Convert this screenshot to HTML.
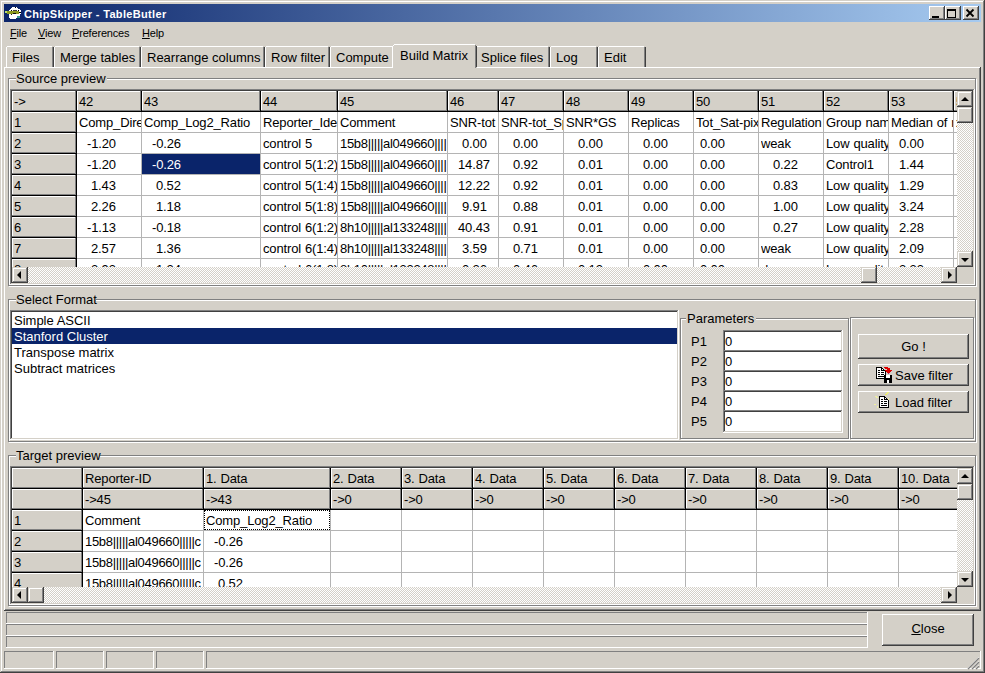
<!DOCTYPE html><html><head><meta charset="utf-8"><style>
html,body{margin:0;padding:0;width:985px;height:673px;overflow:hidden;background:#D4D0C8}
div,svg{position:absolute;box-sizing:border-box}
.t{font-family:"Liberation Sans",sans-serif;white-space:pre;}
.c{font-size:13px;line-height:15px;overflow:hidden;letter-spacing:-0.15px;word-spacing:0.55px}
u{text-decoration:underline;text-underline-offset:1px}
</style></head><body>
<div style="left:0px;top:0px;width:985px;height:673px;background:#D4D0C8;"></div>
<div style="left:0px;top:0px;width:985px;height:1px;background:#D4D0C8;"></div>
<div style="left:0px;top:0px;width:1px;height:673px;background:#D4D0C8;"></div>
<div style="left:1px;top:1px;width:983px;height:1px;background:#FFFFFF;"></div>
<div style="left:1px;top:1px;width:1px;height:671px;background:#FFFFFF;"></div>
<div style="left:984px;top:0px;width:1px;height:673px;background:#404040;"></div>
<div style="left:0px;top:672px;width:985px;height:1px;background:#404040;"></div>
<div style="left:983px;top:1px;width:1px;height:671px;background:#808080;"></div>
<div style="left:1px;top:671px;width:983px;height:1px;background:#808080;"></div>
<div style="left:4px;top:4px;width:977px;height:18px;background:linear-gradient(to right,#0A246A,#A6CAF0);"></div>
<div style="left:929px;top:6px;width:16px;height:14px;background:#D4D0C8;"></div>
<div style="left:929px;top:6px;width:16px;height:1px;background:#FFFFFF;"></div>
<div style="left:929px;top:6px;width:1px;height:14px;background:#FFFFFF;"></div>
<div style="left:929px;top:19px;width:16px;height:1px;background:#404040;"></div>
<div style="left:944px;top:6px;width:1px;height:14px;background:#404040;"></div>
<div style="left:930px;top:7px;width:14px;height:1px;background:#D4D0C8;"></div>
<div style="left:930px;top:7px;width:1px;height:12px;background:#D4D0C8;"></div>
<div style="left:930px;top:18px;width:14px;height:1px;background:#808080;"></div>
<div style="left:943px;top:7px;width:1px;height:12px;background:#808080;"></div>
<div style="left:945px;top:6px;width:16px;height:14px;background:#D4D0C8;"></div>
<div style="left:945px;top:6px;width:16px;height:1px;background:#FFFFFF;"></div>
<div style="left:945px;top:6px;width:1px;height:14px;background:#FFFFFF;"></div>
<div style="left:945px;top:19px;width:16px;height:1px;background:#404040;"></div>
<div style="left:960px;top:6px;width:1px;height:14px;background:#404040;"></div>
<div style="left:946px;top:7px;width:14px;height:1px;background:#D4D0C8;"></div>
<div style="left:946px;top:7px;width:1px;height:12px;background:#D4D0C8;"></div>
<div style="left:946px;top:18px;width:14px;height:1px;background:#808080;"></div>
<div style="left:959px;top:7px;width:1px;height:12px;background:#808080;"></div>
<div style="left:963px;top:6px;width:16px;height:14px;background:#D4D0C8;"></div>
<div style="left:963px;top:6px;width:16px;height:1px;background:#FFFFFF;"></div>
<div style="left:963px;top:6px;width:1px;height:14px;background:#FFFFFF;"></div>
<div style="left:963px;top:19px;width:16px;height:1px;background:#404040;"></div>
<div style="left:978px;top:6px;width:1px;height:14px;background:#404040;"></div>
<div style="left:964px;top:7px;width:14px;height:1px;background:#D4D0C8;"></div>
<div style="left:964px;top:7px;width:1px;height:12px;background:#D4D0C8;"></div>
<div style="left:964px;top:18px;width:14px;height:1px;background:#808080;"></div>
<div style="left:977px;top:7px;width:1px;height:12px;background:#808080;"></div>
<div style="left:932px;top:16px;width:7px;height:2px;background:#000;"></div>
<div style="left:947px;top:9px;width:9px;height:1px;background:#000;"></div>
<div style="left:947px;top:9px;width:1px;height:9px;background:#000;"></div>
<div style="left:947px;top:17px;width:9px;height:1px;background:#000;"></div>
<div style="left:955px;top:9px;width:1px;height:9px;background:#000;"></div>
<div style="left:947px;top:10px;width:9px;height:1px;background:#000;"></div>
<svg style="left:963px;top:6px;width:16px;height:14px" width="16" height="14"><path d="M3.5 3.5 L10.5 10.5 M10.5 3.5 L3.5 10.5" stroke="#000" stroke-width="1.8"/></svg>
<svg style="left:0px;top:0px;width:24px;height:24px" width="24" height="24" shape-rendering="crispEdges"><rect x="12" y="7" width="5" height="1" fill="#fff"/><rect x="11" y="8" width="7" height="1" fill="#fff"/><rect x="10" y="9" width="10" height="1" fill="#fff"/><rect x="9" y="10" width="12" height="1" fill="#fff"/><rect x="8" y="11" width="13" height="1" fill="#fff"/><rect x="8" y="12" width="13" height="1" fill="#fff"/><rect x="8" y="13" width="13" height="1" fill="#fff"/><rect x="9" y="14" width="11" height="1" fill="#fff"/><rect x="9" y="15" width="11" height="1" fill="#fff"/><rect x="9" y="16" width="8" height="1" fill="#fff"/><rect x="9" y="17" width="8" height="1" fill="#fff"/><rect x="10" y="18" width="6" height="1" fill="#fff"/><rect x="7" y="11" width="12" height="3" fill="#8c9a1e"/><rect x="5" y="11" width="2" height="2" fill="#b8e070"/><rect x="11" y="10" width="1" height="1" fill="#000"/><rect x="18" y="10" width="1" height="1" fill="#000"/><rect x="13" y="10" width="4" height="1" fill="#404040"/><rect x="13" y="13" width="3" height="1" fill="#111"/><rect x="19" y="12" width="2" height="1" fill="#000"/><rect x="11" y="14" width="1" height="1" fill="#222"/><rect x="17" y="16" width="3" height="2" fill="#3a9a9a"/><rect x="15" y="7" width="1" height="1" fill="#000"/></svg>
<div class="t" style="left:24px;top:8px;font-size:11px;line-height:13px;color:#fff;font-weight:bold;letter-spacing:0.33px;">ChipSkipper - TableButler</div>
<div class="t" style="left:10px;top:27px;font-size:11px;line-height:13px;color:#000;letter-spacing:-0.18px;"><u>F</u>ile</div>
<div class="t" style="left:38px;top:27px;font-size:11px;line-height:13px;color:#000;letter-spacing:-0.18px;"><u>V</u>iew</div>
<div class="t" style="left:72px;top:27px;font-size:11px;line-height:13px;color:#000;letter-spacing:-0.18px;"><u>P</u>references</div>
<div class="t" style="left:142px;top:27px;font-size:11px;line-height:13px;color:#000;letter-spacing:-0.18px;"><u>H</u>elp</div>
<div style="left:6px;top:46px;width:48px;height:21px;background:#D4D0C8;"></div>
<div style="left:7px;top:46px;width:45px;height:1px;background:#FFFFFF;"></div>
<div style="left:6px;top:47px;width:1px;height:20px;background:#FFFFFF;"></div>
<div style="left:52px;top:47px;width:1px;height:20px;background:#808080;"></div>
<div style="left:53px;top:47px;width:1px;height:20px;background:#404040;"></div>
<div class="t" style="left:12px;top:50px;font-size:13px;line-height:15px;color:#000;">Files</div>
<div style="left:54px;top:46px;width:87px;height:21px;background:#D4D0C8;"></div>
<div style="left:55px;top:46px;width:84px;height:1px;background:#FFFFFF;"></div>
<div style="left:54px;top:47px;width:1px;height:20px;background:#FFFFFF;"></div>
<div style="left:139px;top:47px;width:1px;height:20px;background:#808080;"></div>
<div style="left:140px;top:47px;width:1px;height:20px;background:#404040;"></div>
<div class="t" style="left:60px;top:50px;font-size:13px;line-height:15px;color:#000;">Merge tables</div>
<div style="left:141px;top:46px;width:124px;height:21px;background:#D4D0C8;"></div>
<div style="left:142px;top:46px;width:121px;height:1px;background:#FFFFFF;"></div>
<div style="left:141px;top:47px;width:1px;height:20px;background:#FFFFFF;"></div>
<div style="left:263px;top:47px;width:1px;height:20px;background:#808080;"></div>
<div style="left:264px;top:47px;width:1px;height:20px;background:#404040;"></div>
<div class="t" style="left:147px;top:50px;font-size:13px;line-height:15px;color:#000;">Rearrange columns</div>
<div style="left:265px;top:46px;width:65px;height:21px;background:#D4D0C8;"></div>
<div style="left:266px;top:46px;width:62px;height:1px;background:#FFFFFF;"></div>
<div style="left:265px;top:47px;width:1px;height:20px;background:#FFFFFF;"></div>
<div style="left:328px;top:47px;width:1px;height:20px;background:#808080;"></div>
<div style="left:329px;top:47px;width:1px;height:20px;background:#404040;"></div>
<div class="t" style="left:271px;top:50px;font-size:13px;line-height:15px;color:#000;">Row filter</div>
<div style="left:330px;top:46px;width:66px;height:21px;background:#D4D0C8;"></div>
<div style="left:331px;top:46px;width:63px;height:1px;background:#FFFFFF;"></div>
<div style="left:330px;top:47px;width:1px;height:20px;background:#FFFFFF;"></div>
<div style="left:394px;top:47px;width:1px;height:20px;background:#808080;"></div>
<div style="left:395px;top:47px;width:1px;height:20px;background:#404040;"></div>
<div class="t" style="left:336px;top:50px;font-size:13px;line-height:15px;color:#000;">Compute</div>
<div style="left:475px;top:46px;width:75px;height:21px;background:#D4D0C8;"></div>
<div style="left:476px;top:46px;width:72px;height:1px;background:#FFFFFF;"></div>
<div style="left:475px;top:47px;width:1px;height:20px;background:#FFFFFF;"></div>
<div style="left:548px;top:47px;width:1px;height:20px;background:#808080;"></div>
<div style="left:549px;top:47px;width:1px;height:20px;background:#404040;"></div>
<div class="t" style="left:481px;top:50px;font-size:13px;line-height:15px;color:#000;">Splice files</div>
<div style="left:550px;top:46px;width:48px;height:21px;background:#D4D0C8;"></div>
<div style="left:551px;top:46px;width:45px;height:1px;background:#FFFFFF;"></div>
<div style="left:550px;top:47px;width:1px;height:20px;background:#FFFFFF;"></div>
<div style="left:596px;top:47px;width:1px;height:20px;background:#808080;"></div>
<div style="left:597px;top:47px;width:1px;height:20px;background:#404040;"></div>
<div class="t" style="left:556px;top:50px;font-size:13px;line-height:15px;color:#000;">Log</div>
<div style="left:598px;top:46px;width:48px;height:21px;background:#D4D0C8;"></div>
<div style="left:599px;top:46px;width:45px;height:1px;background:#FFFFFF;"></div>
<div style="left:598px;top:47px;width:1px;height:20px;background:#FFFFFF;"></div>
<div style="left:644px;top:47px;width:1px;height:20px;background:#808080;"></div>
<div style="left:645px;top:47px;width:1px;height:20px;background:#404040;"></div>
<div class="t" style="left:604px;top:50px;font-size:13px;line-height:15px;color:#000;">Edit</div>
<div style="left:4px;top:67px;width:977px;height:1px;background:#FFFFFF;"></div>
<div style="left:4px;top:67px;width:1px;height:544px;background:#FFFFFF;"></div>
<div style="left:979px;top:68px;width:1px;height:542px;background:#808080;"></div>
<div style="left:980px;top:67px;width:1px;height:544px;background:#404040;"></div>
<div style="left:5px;top:609px;width:975px;height:1px;background:#808080;"></div>
<div style="left:4px;top:610px;width:977px;height:1px;background:#404040;"></div>
<div style="left:392px;top:44px;width:85px;height:24px;background:#D4D0C8;"></div>
<div style="left:394px;top:44px;width:81px;height:1px;background:#FFFFFF;"></div>
<div style="left:393px;top:45px;width:1px;height:1px;background:#FFFFFF;"></div>
<div style="left:392px;top:46px;width:1px;height:22px;background:#FFFFFF;"></div>
<div style="left:475px;top:45px;width:1px;height:23px;background:#808080;"></div>
<div style="left:476px;top:46px;width:1px;height:21px;background:#404040;"></div>
<div class="t" style="left:400px;top:48px;font-size:13px;line-height:15px;color:#000;">Build Matrix</div>
<div style="left:9px;top:79px;width:968px;height:1px;background:#FFFFFF;"></div>
<div style="left:9px;top:79px;width:1px;height:208px;background:#FFFFFF;"></div>
<div style="left:9px;top:286px;width:968px;height:1px;background:#FFFFFF;"></div>
<div style="left:976px;top:79px;width:1px;height:208px;background:#FFFFFF;"></div>
<div style="left:8px;top:78px;width:968px;height:1px;background:#808080;"></div>
<div style="left:8px;top:78px;width:1px;height:208px;background:#808080;"></div>
<div style="left:8px;top:285px;width:968px;height:1px;background:#808080;"></div>
<div style="left:975px;top:78px;width:1px;height:208px;background:#808080;"></div>
<div style="left:9px;top:79px;width:966px;height:1px;background:#FFFFFF;"></div>
<div style="left:9px;top:79px;width:1px;height:206px;background:#FFFFFF;"></div>
<div style="left:16px;top:72px;width:91px;height:12px;background:#D4D0C8;"></div>
<div class="t" style="left:16px;top:71px;font-size:13px;line-height:15px;color:#000;">Source preview</div>
<div style="left:9px;top:300px;width:968px;height:1px;background:#FFFFFF;"></div>
<div style="left:9px;top:300px;width:1px;height:143px;background:#FFFFFF;"></div>
<div style="left:9px;top:442px;width:968px;height:1px;background:#FFFFFF;"></div>
<div style="left:976px;top:300px;width:1px;height:143px;background:#FFFFFF;"></div>
<div style="left:8px;top:299px;width:968px;height:1px;background:#808080;"></div>
<div style="left:8px;top:299px;width:1px;height:143px;background:#808080;"></div>
<div style="left:8px;top:441px;width:968px;height:1px;background:#808080;"></div>
<div style="left:975px;top:299px;width:1px;height:143px;background:#808080;"></div>
<div style="left:9px;top:300px;width:966px;height:1px;background:#FFFFFF;"></div>
<div style="left:9px;top:300px;width:1px;height:141px;background:#FFFFFF;"></div>
<div style="left:16px;top:293px;width:80px;height:12px;background:#D4D0C8;"></div>
<div class="t" style="left:16px;top:292px;font-size:13px;line-height:15px;color:#000;">Select Format</div>
<div style="left:9px;top:456px;width:968px;height:1px;background:#FFFFFF;"></div>
<div style="left:9px;top:456px;width:1px;height:151px;background:#FFFFFF;"></div>
<div style="left:9px;top:606px;width:968px;height:1px;background:#FFFFFF;"></div>
<div style="left:976px;top:456px;width:1px;height:151px;background:#FFFFFF;"></div>
<div style="left:8px;top:455px;width:968px;height:1px;background:#808080;"></div>
<div style="left:8px;top:455px;width:1px;height:151px;background:#808080;"></div>
<div style="left:8px;top:605px;width:968px;height:1px;background:#808080;"></div>
<div style="left:975px;top:455px;width:1px;height:151px;background:#808080;"></div>
<div style="left:9px;top:456px;width:966px;height:1px;background:#FFFFFF;"></div>
<div style="left:9px;top:456px;width:1px;height:149px;background:#FFFFFF;"></div>
<div style="left:16px;top:449px;width:84px;height:12px;background:#D4D0C8;"></div>
<div class="t" style="left:16px;top:448px;font-size:13px;line-height:15px;color:#000;">Target preview</div>
<div style="left:10px;top:89px;width:965px;height:1px;background:#808080;"></div>
<div style="left:10px;top:89px;width:1px;height:196px;background:#808080;"></div>
<div style="left:10px;top:284px;width:965px;height:1px;background:#FFFFFF;"></div>
<div style="left:974px;top:89px;width:1px;height:196px;background:#FFFFFF;"></div>
<div style="left:11px;top:90px;width:963px;height:1px;background:#404040;"></div>
<div style="left:11px;top:90px;width:1px;height:194px;background:#404040;"></div>
<div style="left:11px;top:283px;width:963px;height:1px;background:#D4D0C8;"></div>
<div style="left:973px;top:90px;width:1px;height:194px;background:#D4D0C8;"></div>
<div style="left:12px;top:91px;width:945px;height:176px;overflow:hidden"><div style="left:0px;top:0px;width:945px;height:176px;background:#fff"></div><div style="left:0px;top:0px;width:64px;height:20px;background:#D4D0C8"></div><div style="left:0px;top:0px;width:64px;height:1px;background:#FFFFFF"></div><div style="left:0px;top:0px;width:1px;height:20px;background:#FFFFFF"></div><div style="left:0px;top:19px;width:64px;height:1px;background:#808080"></div><div style="left:63px;top:0px;width:1px;height:20px;background:#808080"></div><div style="left:64px;top:0px;width:1px;height:21px;background:#000"></div><div style="left:0px;top:20px;width:65px;height:1px;background:#000"></div><div class="t c" style="left:2px;top:3px;width:62px;color:#000">-&gt;</div><div style="left:65px;top:0px;width:64px;height:20px;background:#D4D0C8"></div><div style="left:65px;top:0px;width:64px;height:1px;background:#FFFFFF"></div><div style="left:65px;top:0px;width:1px;height:20px;background:#FFFFFF"></div><div style="left:65px;top:19px;width:64px;height:1px;background:#808080"></div><div style="left:128px;top:0px;width:1px;height:20px;background:#808080"></div><div style="left:129px;top:0px;width:1px;height:21px;background:#000"></div><div style="left:65px;top:20px;width:65px;height:1px;background:#000"></div><div class="t c" style="left:67px;top:3px;width:62px;color:#000">42</div><div style="left:130px;top:0px;width:118px;height:20px;background:#D4D0C8"></div><div style="left:130px;top:0px;width:118px;height:1px;background:#FFFFFF"></div><div style="left:130px;top:0px;width:1px;height:20px;background:#FFFFFF"></div><div style="left:130px;top:19px;width:118px;height:1px;background:#808080"></div><div style="left:247px;top:0px;width:1px;height:20px;background:#808080"></div><div style="left:248px;top:0px;width:1px;height:21px;background:#000"></div><div style="left:130px;top:20px;width:119px;height:1px;background:#000"></div><div class="t c" style="left:132px;top:3px;width:116px;color:#000">43</div><div style="left:249px;top:0px;width:76px;height:20px;background:#D4D0C8"></div><div style="left:249px;top:0px;width:76px;height:1px;background:#FFFFFF"></div><div style="left:249px;top:0px;width:1px;height:20px;background:#FFFFFF"></div><div style="left:249px;top:19px;width:76px;height:1px;background:#808080"></div><div style="left:324px;top:0px;width:1px;height:20px;background:#808080"></div><div style="left:325px;top:0px;width:1px;height:21px;background:#000"></div><div style="left:249px;top:20px;width:77px;height:1px;background:#000"></div><div class="t c" style="left:251px;top:3px;width:74px;color:#000">44</div><div style="left:326px;top:0px;width:109px;height:20px;background:#D4D0C8"></div><div style="left:326px;top:0px;width:109px;height:1px;background:#FFFFFF"></div><div style="left:326px;top:0px;width:1px;height:20px;background:#FFFFFF"></div><div style="left:326px;top:19px;width:109px;height:1px;background:#808080"></div><div style="left:434px;top:0px;width:1px;height:20px;background:#808080"></div><div style="left:435px;top:0px;width:1px;height:21px;background:#000"></div><div style="left:326px;top:20px;width:110px;height:1px;background:#000"></div><div class="t c" style="left:328px;top:3px;width:107px;color:#000">45</div><div style="left:436px;top:0px;width:50px;height:20px;background:#D4D0C8"></div><div style="left:436px;top:0px;width:50px;height:1px;background:#FFFFFF"></div><div style="left:436px;top:0px;width:1px;height:20px;background:#FFFFFF"></div><div style="left:436px;top:19px;width:50px;height:1px;background:#808080"></div><div style="left:485px;top:0px;width:1px;height:20px;background:#808080"></div><div style="left:486px;top:0px;width:1px;height:21px;background:#000"></div><div style="left:436px;top:20px;width:51px;height:1px;background:#000"></div><div class="t c" style="left:438px;top:3px;width:48px;color:#000">46</div><div style="left:487px;top:0px;width:64px;height:20px;background:#D4D0C8"></div><div style="left:487px;top:0px;width:64px;height:1px;background:#FFFFFF"></div><div style="left:487px;top:0px;width:1px;height:20px;background:#FFFFFF"></div><div style="left:487px;top:19px;width:64px;height:1px;background:#808080"></div><div style="left:550px;top:0px;width:1px;height:20px;background:#808080"></div><div style="left:551px;top:0px;width:1px;height:21px;background:#000"></div><div style="left:487px;top:20px;width:65px;height:1px;background:#000"></div><div class="t c" style="left:489px;top:3px;width:62px;color:#000">47</div><div style="left:552px;top:0px;width:64px;height:20px;background:#D4D0C8"></div><div style="left:552px;top:0px;width:64px;height:1px;background:#FFFFFF"></div><div style="left:552px;top:0px;width:1px;height:20px;background:#FFFFFF"></div><div style="left:552px;top:19px;width:64px;height:1px;background:#808080"></div><div style="left:615px;top:0px;width:1px;height:20px;background:#808080"></div><div style="left:616px;top:0px;width:1px;height:21px;background:#000"></div><div style="left:552px;top:20px;width:65px;height:1px;background:#000"></div><div class="t c" style="left:554px;top:3px;width:62px;color:#000">48</div><div style="left:617px;top:0px;width:64px;height:20px;background:#D4D0C8"></div><div style="left:617px;top:0px;width:64px;height:1px;background:#FFFFFF"></div><div style="left:617px;top:0px;width:1px;height:20px;background:#FFFFFF"></div><div style="left:617px;top:19px;width:64px;height:1px;background:#808080"></div><div style="left:680px;top:0px;width:1px;height:20px;background:#808080"></div><div style="left:681px;top:0px;width:1px;height:21px;background:#000"></div><div style="left:617px;top:20px;width:65px;height:1px;background:#000"></div><div class="t c" style="left:619px;top:3px;width:62px;color:#000">49</div><div style="left:682px;top:0px;width:64px;height:20px;background:#D4D0C8"></div><div style="left:682px;top:0px;width:64px;height:1px;background:#FFFFFF"></div><div style="left:682px;top:0px;width:1px;height:20px;background:#FFFFFF"></div><div style="left:682px;top:19px;width:64px;height:1px;background:#808080"></div><div style="left:745px;top:0px;width:1px;height:20px;background:#808080"></div><div style="left:746px;top:0px;width:1px;height:21px;background:#000"></div><div style="left:682px;top:20px;width:65px;height:1px;background:#000"></div><div class="t c" style="left:684px;top:3px;width:62px;color:#000">50</div><div style="left:747px;top:0px;width:64px;height:20px;background:#D4D0C8"></div><div style="left:747px;top:0px;width:64px;height:1px;background:#FFFFFF"></div><div style="left:747px;top:0px;width:1px;height:20px;background:#FFFFFF"></div><div style="left:747px;top:19px;width:64px;height:1px;background:#808080"></div><div style="left:810px;top:0px;width:1px;height:20px;background:#808080"></div><div style="left:811px;top:0px;width:1px;height:21px;background:#000"></div><div style="left:747px;top:20px;width:65px;height:1px;background:#000"></div><div class="t c" style="left:749px;top:3px;width:62px;color:#000">51</div><div style="left:812px;top:0px;width:64px;height:20px;background:#D4D0C8"></div><div style="left:812px;top:0px;width:64px;height:1px;background:#FFFFFF"></div><div style="left:812px;top:0px;width:1px;height:20px;background:#FFFFFF"></div><div style="left:812px;top:19px;width:64px;height:1px;background:#808080"></div><div style="left:875px;top:0px;width:1px;height:20px;background:#808080"></div><div style="left:876px;top:0px;width:1px;height:21px;background:#000"></div><div style="left:812px;top:20px;width:65px;height:1px;background:#000"></div><div class="t c" style="left:814px;top:3px;width:62px;color:#000">52</div><div style="left:877px;top:0px;width:64px;height:20px;background:#D4D0C8"></div><div style="left:877px;top:0px;width:64px;height:1px;background:#FFFFFF"></div><div style="left:877px;top:0px;width:1px;height:20px;background:#FFFFFF"></div><div style="left:877px;top:19px;width:64px;height:1px;background:#808080"></div><div style="left:940px;top:0px;width:1px;height:20px;background:#808080"></div><div style="left:941px;top:0px;width:1px;height:21px;background:#000"></div><div style="left:877px;top:20px;width:65px;height:1px;background:#000"></div><div class="t c" style="left:879px;top:3px;width:62px;color:#000">53</div><div style="left:942px;top:0px;width:64px;height:20px;background:#D4D0C8"></div><div style="left:942px;top:0px;width:64px;height:1px;background:#FFFFFF"></div><div style="left:942px;top:0px;width:1px;height:20px;background:#FFFFFF"></div><div style="left:942px;top:19px;width:64px;height:1px;background:#808080"></div><div style="left:1005px;top:0px;width:1px;height:20px;background:#808080"></div><div style="left:1006px;top:0px;width:1px;height:21px;background:#000"></div><div style="left:942px;top:20px;width:65px;height:1px;background:#000"></div><div class="t c" style="left:944px;top:3px;width:62px;color:#000">54</div><div style="left:0px;top:21px;width:64px;height:20px;background:#D4D0C8"></div><div style="left:0px;top:21px;width:64px;height:1px;background:#FFFFFF"></div><div style="left:0px;top:21px;width:1px;height:20px;background:#FFFFFF"></div><div style="left:0px;top:40px;width:64px;height:1px;background:#808080"></div><div style="left:63px;top:21px;width:1px;height:20px;background:#808080"></div><div style="left:64px;top:21px;width:1px;height:21px;background:#000"></div><div style="left:0px;top:41px;width:65px;height:1px;background:#000"></div><div class="t c" style="left:2px;top:24px;width:62px;color:#000">1</div><div style="left:129px;top:21px;width:1px;height:21px;background:#B4B4B4"></div><div style="left:65px;top:41px;width:65px;height:1px;background:#B4B4B4"></div><div class="t c" style="left:67px;top:24px;width:62px;color:#000">Comp_Direction</div><div style="left:248px;top:21px;width:1px;height:21px;background:#B4B4B4"></div><div style="left:130px;top:41px;width:119px;height:1px;background:#B4B4B4"></div><div class="t c" style="left:132px;top:24px;width:116px;color:#000">Comp_Log2_Ratio</div><div style="left:325px;top:21px;width:1px;height:21px;background:#B4B4B4"></div><div style="left:249px;top:41px;width:77px;height:1px;background:#B4B4B4"></div><div class="t c" style="left:251px;top:24px;width:74px;color:#000">Reporter_Identifier</div><div style="left:435px;top:21px;width:1px;height:21px;background:#B4B4B4"></div><div style="left:326px;top:41px;width:110px;height:1px;background:#B4B4B4"></div><div class="t c" style="left:328px;top:24px;width:107px;color:#000">Comment</div><div style="left:486px;top:21px;width:1px;height:21px;background:#B4B4B4"></div><div style="left:436px;top:41px;width:51px;height:1px;background:#B4B4B4"></div><div class="t c" style="left:438px;top:24px;width:48px;color:#000">SNR-tot</div><div style="left:551px;top:21px;width:1px;height:21px;background:#B4B4B4"></div><div style="left:487px;top:41px;width:65px;height:1px;background:#B4B4B4"></div><div class="t c" style="left:489px;top:24px;width:62px;color:#000">SNR-tot_Spots</div><div style="left:616px;top:21px;width:1px;height:21px;background:#B4B4B4"></div><div style="left:552px;top:41px;width:65px;height:1px;background:#B4B4B4"></div><div class="t c" style="left:554px;top:24px;width:62px;color:#000">SNR*GS</div><div style="left:681px;top:21px;width:1px;height:21px;background:#B4B4B4"></div><div style="left:617px;top:41px;width:65px;height:1px;background:#B4B4B4"></div><div class="t c" style="left:619px;top:24px;width:62px;color:#000">Replicas</div><div style="left:746px;top:21px;width:1px;height:21px;background:#B4B4B4"></div><div style="left:682px;top:41px;width:65px;height:1px;background:#B4B4B4"></div><div class="t c" style="left:684px;top:24px;width:62px;color:#000">Tot_Sat-pixel</div><div style="left:811px;top:21px;width:1px;height:21px;background:#B4B4B4"></div><div style="left:747px;top:41px;width:65px;height:1px;background:#B4B4B4"></div><div class="t c" style="left:749px;top:24px;width:62px;color:#000">Regulation</div><div style="left:876px;top:21px;width:1px;height:21px;background:#B4B4B4"></div><div style="left:812px;top:41px;width:65px;height:1px;background:#B4B4B4"></div><div class="t c" style="left:814px;top:24px;width:62px;color:#000">Group name</div><div style="left:941px;top:21px;width:1px;height:21px;background:#B4B4B4"></div><div style="left:877px;top:41px;width:65px;height:1px;background:#B4B4B4"></div><div class="t c" style="left:879px;top:24px;width:62px;color:#000">Median of ratios</div><div style="left:1006px;top:21px;width:1px;height:21px;background:#B4B4B4"></div><div style="left:942px;top:41px;width:65px;height:1px;background:#B4B4B4"></div><div class="t c" style="left:944px;top:24px;width:62px;color:#000">x</div><div style="left:0px;top:42px;width:64px;height:20px;background:#D4D0C8"></div><div style="left:0px;top:42px;width:64px;height:1px;background:#FFFFFF"></div><div style="left:0px;top:42px;width:1px;height:20px;background:#FFFFFF"></div><div style="left:0px;top:61px;width:64px;height:1px;background:#808080"></div><div style="left:63px;top:42px;width:1px;height:20px;background:#808080"></div><div style="left:64px;top:42px;width:1px;height:21px;background:#000"></div><div style="left:0px;top:62px;width:65px;height:1px;background:#000"></div><div class="t c" style="left:2px;top:45px;width:62px;color:#000">2</div><div style="left:129px;top:42px;width:1px;height:21px;background:#B4B4B4"></div><div style="left:65px;top:62px;width:65px;height:1px;background:#B4B4B4"></div><div class="t c" style="left:67px;top:45px;width:62px;color:#000">  -1.20</div><div style="left:248px;top:42px;width:1px;height:21px;background:#B4B4B4"></div><div style="left:130px;top:62px;width:119px;height:1px;background:#B4B4B4"></div><div class="t c" style="left:132px;top:45px;width:116px;color:#000">  -0.26</div><div style="left:325px;top:42px;width:1px;height:21px;background:#B4B4B4"></div><div style="left:249px;top:62px;width:77px;height:1px;background:#B4B4B4"></div><div class="t c" style="left:251px;top:45px;width:74px;color:#000">control 5</div><div style="left:435px;top:42px;width:1px;height:21px;background:#B4B4B4"></div><div style="left:326px;top:62px;width:110px;height:1px;background:#B4B4B4"></div><div class="t c" style="left:328px;top:45px;width:107px;color:#000"><span style="letter-spacing:-0.3px">15b8|||||al049660|||||c</span></div><div style="left:486px;top:42px;width:1px;height:21px;background:#B4B4B4"></div><div style="left:436px;top:62px;width:51px;height:1px;background:#B4B4B4"></div><div class="t c" style="left:438px;top:45px;width:48px;color:#000">   0.00</div><div style="left:551px;top:42px;width:1px;height:21px;background:#B4B4B4"></div><div style="left:487px;top:62px;width:65px;height:1px;background:#B4B4B4"></div><div class="t c" style="left:489px;top:45px;width:62px;color:#000">   0.00</div><div style="left:616px;top:42px;width:1px;height:21px;background:#B4B4B4"></div><div style="left:552px;top:62px;width:65px;height:1px;background:#B4B4B4"></div><div class="t c" style="left:554px;top:45px;width:62px;color:#000">   0.00</div><div style="left:681px;top:42px;width:1px;height:21px;background:#B4B4B4"></div><div style="left:617px;top:62px;width:65px;height:1px;background:#B4B4B4"></div><div class="t c" style="left:619px;top:45px;width:62px;color:#000">   0.00</div><div style="left:746px;top:42px;width:1px;height:21px;background:#B4B4B4"></div><div style="left:682px;top:62px;width:65px;height:1px;background:#B4B4B4"></div><div class="t c" style="left:684px;top:45px;width:62px;color:#000"> 0.00</div><div style="left:811px;top:42px;width:1px;height:21px;background:#B4B4B4"></div><div style="left:747px;top:62px;width:65px;height:1px;background:#B4B4B4"></div><div class="t c" style="left:749px;top:45px;width:62px;color:#000">weak</div><div style="left:876px;top:42px;width:1px;height:21px;background:#B4B4B4"></div><div style="left:812px;top:62px;width:65px;height:1px;background:#B4B4B4"></div><div class="t c" style="left:814px;top:45px;width:62px;color:#000">Low quality</div><div style="left:941px;top:42px;width:1px;height:21px;background:#B4B4B4"></div><div style="left:877px;top:62px;width:65px;height:1px;background:#B4B4B4"></div><div class="t c" style="left:879px;top:45px;width:62px;color:#000">  0.00</div><div style="left:1006px;top:42px;width:1px;height:21px;background:#B4B4B4"></div><div style="left:942px;top:62px;width:65px;height:1px;background:#B4B4B4"></div><div style="left:0px;top:63px;width:64px;height:20px;background:#D4D0C8"></div><div style="left:0px;top:63px;width:64px;height:1px;background:#FFFFFF"></div><div style="left:0px;top:63px;width:1px;height:20px;background:#FFFFFF"></div><div style="left:0px;top:82px;width:64px;height:1px;background:#808080"></div><div style="left:63px;top:63px;width:1px;height:20px;background:#808080"></div><div style="left:64px;top:63px;width:1px;height:21px;background:#000"></div><div style="left:0px;top:83px;width:65px;height:1px;background:#000"></div><div class="t c" style="left:2px;top:66px;width:62px;color:#000">3</div><div style="left:129px;top:63px;width:1px;height:21px;background:#B4B4B4"></div><div style="left:65px;top:83px;width:65px;height:1px;background:#B4B4B4"></div><div class="t c" style="left:67px;top:66px;width:62px;color:#000">  -1.20</div><div style="left:130px;top:63px;width:118px;height:20px;background:#0A246A"></div><div style="left:248px;top:63px;width:1px;height:21px;background:#B4B4B4"></div><div style="left:130px;top:83px;width:119px;height:1px;background:#B4B4B4"></div><div class="t c" style="left:132px;top:66px;width:116px;color:#fff">  -0.26</div><div style="left:325px;top:63px;width:1px;height:21px;background:#B4B4B4"></div><div style="left:249px;top:83px;width:77px;height:1px;background:#B4B4B4"></div><div class="t c" style="left:251px;top:66px;width:74px;color:#000">control 5(1:2)</div><div style="left:435px;top:63px;width:1px;height:21px;background:#B4B4B4"></div><div style="left:326px;top:83px;width:110px;height:1px;background:#B4B4B4"></div><div class="t c" style="left:328px;top:66px;width:107px;color:#000"><span style="letter-spacing:-0.3px">15b8|||||al049660|||||c</span></div><div style="left:486px;top:63px;width:1px;height:21px;background:#B4B4B4"></div><div style="left:436px;top:83px;width:51px;height:1px;background:#B4B4B4"></div><div class="t c" style="left:438px;top:66px;width:48px;color:#000">  14.87</div><div style="left:551px;top:63px;width:1px;height:21px;background:#B4B4B4"></div><div style="left:487px;top:83px;width:65px;height:1px;background:#B4B4B4"></div><div class="t c" style="left:489px;top:66px;width:62px;color:#000">   0.92</div><div style="left:616px;top:63px;width:1px;height:21px;background:#B4B4B4"></div><div style="left:552px;top:83px;width:65px;height:1px;background:#B4B4B4"></div><div class="t c" style="left:554px;top:66px;width:62px;color:#000">   0.01</div><div style="left:681px;top:63px;width:1px;height:21px;background:#B4B4B4"></div><div style="left:617px;top:83px;width:65px;height:1px;background:#B4B4B4"></div><div class="t c" style="left:619px;top:66px;width:62px;color:#000">   0.00</div><div style="left:746px;top:63px;width:1px;height:21px;background:#B4B4B4"></div><div style="left:682px;top:83px;width:65px;height:1px;background:#B4B4B4"></div><div class="t c" style="left:684px;top:66px;width:62px;color:#000"> 0.00</div><div style="left:811px;top:63px;width:1px;height:21px;background:#B4B4B4"></div><div style="left:747px;top:83px;width:65px;height:1px;background:#B4B4B4"></div><div class="t c" style="left:749px;top:66px;width:62px;color:#000">   0.22</div><div style="left:876px;top:63px;width:1px;height:21px;background:#B4B4B4"></div><div style="left:812px;top:83px;width:65px;height:1px;background:#B4B4B4"></div><div class="t c" style="left:814px;top:66px;width:62px;color:#000">Control1</div><div style="left:941px;top:63px;width:1px;height:21px;background:#B4B4B4"></div><div style="left:877px;top:83px;width:65px;height:1px;background:#B4B4B4"></div><div class="t c" style="left:879px;top:66px;width:62px;color:#000">  1.44</div><div style="left:1006px;top:63px;width:1px;height:21px;background:#B4B4B4"></div><div style="left:942px;top:83px;width:65px;height:1px;background:#B4B4B4"></div><div style="left:0px;top:84px;width:64px;height:20px;background:#D4D0C8"></div><div style="left:0px;top:84px;width:64px;height:1px;background:#FFFFFF"></div><div style="left:0px;top:84px;width:1px;height:20px;background:#FFFFFF"></div><div style="left:0px;top:103px;width:64px;height:1px;background:#808080"></div><div style="left:63px;top:84px;width:1px;height:20px;background:#808080"></div><div style="left:64px;top:84px;width:1px;height:21px;background:#000"></div><div style="left:0px;top:104px;width:65px;height:1px;background:#000"></div><div class="t c" style="left:2px;top:87px;width:62px;color:#000">4</div><div style="left:129px;top:84px;width:1px;height:21px;background:#B4B4B4"></div><div style="left:65px;top:104px;width:65px;height:1px;background:#B4B4B4"></div><div class="t c" style="left:67px;top:87px;width:62px;color:#000">   1.43</div><div style="left:248px;top:84px;width:1px;height:21px;background:#B4B4B4"></div><div style="left:130px;top:104px;width:119px;height:1px;background:#B4B4B4"></div><div class="t c" style="left:132px;top:87px;width:116px;color:#000">   0.52</div><div style="left:325px;top:84px;width:1px;height:21px;background:#B4B4B4"></div><div style="left:249px;top:104px;width:77px;height:1px;background:#B4B4B4"></div><div class="t c" style="left:251px;top:87px;width:74px;color:#000">control 5(1:4)</div><div style="left:435px;top:84px;width:1px;height:21px;background:#B4B4B4"></div><div style="left:326px;top:104px;width:110px;height:1px;background:#B4B4B4"></div><div class="t c" style="left:328px;top:87px;width:107px;color:#000"><span style="letter-spacing:-0.3px">15b8|||||al049660|||||c</span></div><div style="left:486px;top:84px;width:1px;height:21px;background:#B4B4B4"></div><div style="left:436px;top:104px;width:51px;height:1px;background:#B4B4B4"></div><div class="t c" style="left:438px;top:87px;width:48px;color:#000">  12.22</div><div style="left:551px;top:84px;width:1px;height:21px;background:#B4B4B4"></div><div style="left:487px;top:104px;width:65px;height:1px;background:#B4B4B4"></div><div class="t c" style="left:489px;top:87px;width:62px;color:#000">   0.92</div><div style="left:616px;top:84px;width:1px;height:21px;background:#B4B4B4"></div><div style="left:552px;top:104px;width:65px;height:1px;background:#B4B4B4"></div><div class="t c" style="left:554px;top:87px;width:62px;color:#000">   0.01</div><div style="left:681px;top:84px;width:1px;height:21px;background:#B4B4B4"></div><div style="left:617px;top:104px;width:65px;height:1px;background:#B4B4B4"></div><div class="t c" style="left:619px;top:87px;width:62px;color:#000">   0.00</div><div style="left:746px;top:84px;width:1px;height:21px;background:#B4B4B4"></div><div style="left:682px;top:104px;width:65px;height:1px;background:#B4B4B4"></div><div class="t c" style="left:684px;top:87px;width:62px;color:#000"> 0.00</div><div style="left:811px;top:84px;width:1px;height:21px;background:#B4B4B4"></div><div style="left:747px;top:104px;width:65px;height:1px;background:#B4B4B4"></div><div class="t c" style="left:749px;top:87px;width:62px;color:#000">   0.83</div><div style="left:876px;top:84px;width:1px;height:21px;background:#B4B4B4"></div><div style="left:812px;top:104px;width:65px;height:1px;background:#B4B4B4"></div><div class="t c" style="left:814px;top:87px;width:62px;color:#000">Low quality</div><div style="left:941px;top:84px;width:1px;height:21px;background:#B4B4B4"></div><div style="left:877px;top:104px;width:65px;height:1px;background:#B4B4B4"></div><div class="t c" style="left:879px;top:87px;width:62px;color:#000">  1.29</div><div style="left:1006px;top:84px;width:1px;height:21px;background:#B4B4B4"></div><div style="left:942px;top:104px;width:65px;height:1px;background:#B4B4B4"></div><div style="left:0px;top:105px;width:64px;height:20px;background:#D4D0C8"></div><div style="left:0px;top:105px;width:64px;height:1px;background:#FFFFFF"></div><div style="left:0px;top:105px;width:1px;height:20px;background:#FFFFFF"></div><div style="left:0px;top:124px;width:64px;height:1px;background:#808080"></div><div style="left:63px;top:105px;width:1px;height:20px;background:#808080"></div><div style="left:64px;top:105px;width:1px;height:21px;background:#000"></div><div style="left:0px;top:125px;width:65px;height:1px;background:#000"></div><div class="t c" style="left:2px;top:108px;width:62px;color:#000">5</div><div style="left:129px;top:105px;width:1px;height:21px;background:#B4B4B4"></div><div style="left:65px;top:125px;width:65px;height:1px;background:#B4B4B4"></div><div class="t c" style="left:67px;top:108px;width:62px;color:#000">   2.26</div><div style="left:248px;top:105px;width:1px;height:21px;background:#B4B4B4"></div><div style="left:130px;top:125px;width:119px;height:1px;background:#B4B4B4"></div><div class="t c" style="left:132px;top:108px;width:116px;color:#000">   1.18</div><div style="left:325px;top:105px;width:1px;height:21px;background:#B4B4B4"></div><div style="left:249px;top:125px;width:77px;height:1px;background:#B4B4B4"></div><div class="t c" style="left:251px;top:108px;width:74px;color:#000">control 5(1:8)</div><div style="left:435px;top:105px;width:1px;height:21px;background:#B4B4B4"></div><div style="left:326px;top:125px;width:110px;height:1px;background:#B4B4B4"></div><div class="t c" style="left:328px;top:108px;width:107px;color:#000"><span style="letter-spacing:-0.3px">15b8|||||al049660|||||c</span></div><div style="left:486px;top:105px;width:1px;height:21px;background:#B4B4B4"></div><div style="left:436px;top:125px;width:51px;height:1px;background:#B4B4B4"></div><div class="t c" style="left:438px;top:108px;width:48px;color:#000">   9.91</div><div style="left:551px;top:105px;width:1px;height:21px;background:#B4B4B4"></div><div style="left:487px;top:125px;width:65px;height:1px;background:#B4B4B4"></div><div class="t c" style="left:489px;top:108px;width:62px;color:#000">   0.88</div><div style="left:616px;top:105px;width:1px;height:21px;background:#B4B4B4"></div><div style="left:552px;top:125px;width:65px;height:1px;background:#B4B4B4"></div><div class="t c" style="left:554px;top:108px;width:62px;color:#000">   0.01</div><div style="left:681px;top:105px;width:1px;height:21px;background:#B4B4B4"></div><div style="left:617px;top:125px;width:65px;height:1px;background:#B4B4B4"></div><div class="t c" style="left:619px;top:108px;width:62px;color:#000">   0.00</div><div style="left:746px;top:105px;width:1px;height:21px;background:#B4B4B4"></div><div style="left:682px;top:125px;width:65px;height:1px;background:#B4B4B4"></div><div class="t c" style="left:684px;top:108px;width:62px;color:#000"> 0.00</div><div style="left:811px;top:105px;width:1px;height:21px;background:#B4B4B4"></div><div style="left:747px;top:125px;width:65px;height:1px;background:#B4B4B4"></div><div class="t c" style="left:749px;top:108px;width:62px;color:#000">   1.00</div><div style="left:876px;top:105px;width:1px;height:21px;background:#B4B4B4"></div><div style="left:812px;top:125px;width:65px;height:1px;background:#B4B4B4"></div><div class="t c" style="left:814px;top:108px;width:62px;color:#000">Low quality</div><div style="left:941px;top:105px;width:1px;height:21px;background:#B4B4B4"></div><div style="left:877px;top:125px;width:65px;height:1px;background:#B4B4B4"></div><div class="t c" style="left:879px;top:108px;width:62px;color:#000">  3.24</div><div style="left:1006px;top:105px;width:1px;height:21px;background:#B4B4B4"></div><div style="left:942px;top:125px;width:65px;height:1px;background:#B4B4B4"></div><div style="left:0px;top:126px;width:64px;height:20px;background:#D4D0C8"></div><div style="left:0px;top:126px;width:64px;height:1px;background:#FFFFFF"></div><div style="left:0px;top:126px;width:1px;height:20px;background:#FFFFFF"></div><div style="left:0px;top:145px;width:64px;height:1px;background:#808080"></div><div style="left:63px;top:126px;width:1px;height:20px;background:#808080"></div><div style="left:64px;top:126px;width:1px;height:21px;background:#000"></div><div style="left:0px;top:146px;width:65px;height:1px;background:#000"></div><div class="t c" style="left:2px;top:129px;width:62px;color:#000">6</div><div style="left:129px;top:126px;width:1px;height:21px;background:#B4B4B4"></div><div style="left:65px;top:146px;width:65px;height:1px;background:#B4B4B4"></div><div class="t c" style="left:67px;top:129px;width:62px;color:#000">  -1.13</div><div style="left:248px;top:126px;width:1px;height:21px;background:#B4B4B4"></div><div style="left:130px;top:146px;width:119px;height:1px;background:#B4B4B4"></div><div class="t c" style="left:132px;top:129px;width:116px;color:#000">  -0.18</div><div style="left:325px;top:126px;width:1px;height:21px;background:#B4B4B4"></div><div style="left:249px;top:146px;width:77px;height:1px;background:#B4B4B4"></div><div class="t c" style="left:251px;top:129px;width:74px;color:#000">control 6(1:2)</div><div style="left:435px;top:126px;width:1px;height:21px;background:#B4B4B4"></div><div style="left:326px;top:146px;width:110px;height:1px;background:#B4B4B4"></div><div class="t c" style="left:328px;top:129px;width:107px;color:#000"><span style="letter-spacing:-0.3px">8h10|||||al133248|||||c</span></div><div style="left:486px;top:126px;width:1px;height:21px;background:#B4B4B4"></div><div style="left:436px;top:146px;width:51px;height:1px;background:#B4B4B4"></div><div class="t c" style="left:438px;top:129px;width:48px;color:#000">  40.43</div><div style="left:551px;top:126px;width:1px;height:21px;background:#B4B4B4"></div><div style="left:487px;top:146px;width:65px;height:1px;background:#B4B4B4"></div><div class="t c" style="left:489px;top:129px;width:62px;color:#000">   0.91</div><div style="left:616px;top:126px;width:1px;height:21px;background:#B4B4B4"></div><div style="left:552px;top:146px;width:65px;height:1px;background:#B4B4B4"></div><div class="t c" style="left:554px;top:129px;width:62px;color:#000">   0.01</div><div style="left:681px;top:126px;width:1px;height:21px;background:#B4B4B4"></div><div style="left:617px;top:146px;width:65px;height:1px;background:#B4B4B4"></div><div class="t c" style="left:619px;top:129px;width:62px;color:#000">   0.00</div><div style="left:746px;top:126px;width:1px;height:21px;background:#B4B4B4"></div><div style="left:682px;top:146px;width:65px;height:1px;background:#B4B4B4"></div><div class="t c" style="left:684px;top:129px;width:62px;color:#000"> 0.00</div><div style="left:811px;top:126px;width:1px;height:21px;background:#B4B4B4"></div><div style="left:747px;top:146px;width:65px;height:1px;background:#B4B4B4"></div><div class="t c" style="left:749px;top:129px;width:62px;color:#000">   0.27</div><div style="left:876px;top:126px;width:1px;height:21px;background:#B4B4B4"></div><div style="left:812px;top:146px;width:65px;height:1px;background:#B4B4B4"></div><div class="t c" style="left:814px;top:129px;width:62px;color:#000">Low quality</div><div style="left:941px;top:126px;width:1px;height:21px;background:#B4B4B4"></div><div style="left:877px;top:146px;width:65px;height:1px;background:#B4B4B4"></div><div class="t c" style="left:879px;top:129px;width:62px;color:#000">  2.28</div><div style="left:1006px;top:126px;width:1px;height:21px;background:#B4B4B4"></div><div style="left:942px;top:146px;width:65px;height:1px;background:#B4B4B4"></div><div style="left:0px;top:147px;width:64px;height:20px;background:#D4D0C8"></div><div style="left:0px;top:147px;width:64px;height:1px;background:#FFFFFF"></div><div style="left:0px;top:147px;width:1px;height:20px;background:#FFFFFF"></div><div style="left:0px;top:166px;width:64px;height:1px;background:#808080"></div><div style="left:63px;top:147px;width:1px;height:20px;background:#808080"></div><div style="left:64px;top:147px;width:1px;height:21px;background:#000"></div><div style="left:0px;top:167px;width:65px;height:1px;background:#000"></div><div class="t c" style="left:2px;top:150px;width:62px;color:#000">7</div><div style="left:129px;top:147px;width:1px;height:21px;background:#B4B4B4"></div><div style="left:65px;top:167px;width:65px;height:1px;background:#B4B4B4"></div><div class="t c" style="left:67px;top:150px;width:62px;color:#000">   2.57</div><div style="left:248px;top:147px;width:1px;height:21px;background:#B4B4B4"></div><div style="left:130px;top:167px;width:119px;height:1px;background:#B4B4B4"></div><div class="t c" style="left:132px;top:150px;width:116px;color:#000">   1.36</div><div style="left:325px;top:147px;width:1px;height:21px;background:#B4B4B4"></div><div style="left:249px;top:167px;width:77px;height:1px;background:#B4B4B4"></div><div class="t c" style="left:251px;top:150px;width:74px;color:#000">control 6(1:4)</div><div style="left:435px;top:147px;width:1px;height:21px;background:#B4B4B4"></div><div style="left:326px;top:167px;width:110px;height:1px;background:#B4B4B4"></div><div class="t c" style="left:328px;top:150px;width:107px;color:#000"><span style="letter-spacing:-0.3px">8h10|||||al133248|||||c</span></div><div style="left:486px;top:147px;width:1px;height:21px;background:#B4B4B4"></div><div style="left:436px;top:167px;width:51px;height:1px;background:#B4B4B4"></div><div class="t c" style="left:438px;top:150px;width:48px;color:#000">   3.59</div><div style="left:551px;top:147px;width:1px;height:21px;background:#B4B4B4"></div><div style="left:487px;top:167px;width:65px;height:1px;background:#B4B4B4"></div><div class="t c" style="left:489px;top:150px;width:62px;color:#000">   0.71</div><div style="left:616px;top:147px;width:1px;height:21px;background:#B4B4B4"></div><div style="left:552px;top:167px;width:65px;height:1px;background:#B4B4B4"></div><div class="t c" style="left:554px;top:150px;width:62px;color:#000">   0.01</div><div style="left:681px;top:147px;width:1px;height:21px;background:#B4B4B4"></div><div style="left:617px;top:167px;width:65px;height:1px;background:#B4B4B4"></div><div class="t c" style="left:619px;top:150px;width:62px;color:#000">   0.00</div><div style="left:746px;top:147px;width:1px;height:21px;background:#B4B4B4"></div><div style="left:682px;top:167px;width:65px;height:1px;background:#B4B4B4"></div><div class="t c" style="left:684px;top:150px;width:62px;color:#000"> 0.00</div><div style="left:811px;top:147px;width:1px;height:21px;background:#B4B4B4"></div><div style="left:747px;top:167px;width:65px;height:1px;background:#B4B4B4"></div><div class="t c" style="left:749px;top:150px;width:62px;color:#000">weak</div><div style="left:876px;top:147px;width:1px;height:21px;background:#B4B4B4"></div><div style="left:812px;top:167px;width:65px;height:1px;background:#B4B4B4"></div><div class="t c" style="left:814px;top:150px;width:62px;color:#000">Low quality</div><div style="left:941px;top:147px;width:1px;height:21px;background:#B4B4B4"></div><div style="left:877px;top:167px;width:65px;height:1px;background:#B4B4B4"></div><div class="t c" style="left:879px;top:150px;width:62px;color:#000">  2.09</div><div style="left:1006px;top:147px;width:1px;height:21px;background:#B4B4B4"></div><div style="left:942px;top:167px;width:65px;height:1px;background:#B4B4B4"></div><div style="left:0px;top:168px;width:64px;height:20px;background:#D4D0C8"></div><div style="left:0px;top:168px;width:64px;height:1px;background:#FFFFFF"></div><div style="left:0px;top:168px;width:1px;height:20px;background:#FFFFFF"></div><div style="left:0px;top:187px;width:64px;height:1px;background:#808080"></div><div style="left:63px;top:168px;width:1px;height:20px;background:#808080"></div><div style="left:64px;top:168px;width:1px;height:21px;background:#000"></div><div style="left:0px;top:188px;width:65px;height:1px;background:#000"></div><div class="t c" style="left:2px;top:171px;width:62px;color:#000">8</div><div style="left:129px;top:168px;width:1px;height:21px;background:#B4B4B4"></div><div style="left:65px;top:188px;width:65px;height:1px;background:#B4B4B4"></div><div class="t c" style="left:67px;top:171px;width:62px;color:#000">   2.93</div><div style="left:248px;top:168px;width:1px;height:21px;background:#B4B4B4"></div><div style="left:130px;top:188px;width:119px;height:1px;background:#B4B4B4"></div><div class="t c" style="left:132px;top:171px;width:116px;color:#000">   1.24</div><div style="left:325px;top:168px;width:1px;height:21px;background:#B4B4B4"></div><div style="left:249px;top:188px;width:77px;height:1px;background:#B4B4B4"></div><div class="t c" style="left:251px;top:171px;width:74px;color:#000">control 6(1:8)</div><div style="left:435px;top:168px;width:1px;height:21px;background:#B4B4B4"></div><div style="left:326px;top:188px;width:110px;height:1px;background:#B4B4B4"></div><div class="t c" style="left:328px;top:171px;width:107px;color:#000"><span style="letter-spacing:-0.3px">8h10|||||al133248|||||c</span></div><div style="left:486px;top:168px;width:1px;height:21px;background:#B4B4B4"></div><div style="left:436px;top:188px;width:51px;height:1px;background:#B4B4B4"></div><div class="t c" style="left:438px;top:171px;width:48px;color:#000">   0.26</div><div style="left:551px;top:168px;width:1px;height:21px;background:#B4B4B4"></div><div style="left:487px;top:188px;width:65px;height:1px;background:#B4B4B4"></div><div class="t c" style="left:489px;top:171px;width:62px;color:#000">   0.46</div><div style="left:616px;top:168px;width:1px;height:21px;background:#B4B4B4"></div><div style="left:552px;top:188px;width:65px;height:1px;background:#B4B4B4"></div><div class="t c" style="left:554px;top:171px;width:62px;color:#000">   0.12</div><div style="left:681px;top:168px;width:1px;height:21px;background:#B4B4B4"></div><div style="left:617px;top:188px;width:65px;height:1px;background:#B4B4B4"></div><div class="t c" style="left:619px;top:171px;width:62px;color:#000">   0.00</div><div style="left:746px;top:168px;width:1px;height:21px;background:#B4B4B4"></div><div style="left:682px;top:188px;width:65px;height:1px;background:#B4B4B4"></div><div class="t c" style="left:684px;top:171px;width:62px;color:#000"> 0.00</div><div style="left:811px;top:168px;width:1px;height:21px;background:#B4B4B4"></div><div style="left:747px;top:188px;width:65px;height:1px;background:#B4B4B4"></div><div class="t c" style="left:749px;top:171px;width:62px;color:#000">down</div><div style="left:876px;top:168px;width:1px;height:21px;background:#B4B4B4"></div><div style="left:812px;top:188px;width:65px;height:1px;background:#B4B4B4"></div><div class="t c" style="left:814px;top:171px;width:62px;color:#000">Low quality</div><div style="left:941px;top:168px;width:1px;height:21px;background:#B4B4B4"></div><div style="left:877px;top:188px;width:65px;height:1px;background:#B4B4B4"></div><div class="t c" style="left:879px;top:171px;width:62px;color:#000">  2.33</div><div style="left:1006px;top:168px;width:1px;height:21px;background:#B4B4B4"></div><div style="left:942px;top:188px;width:65px;height:1px;background:#B4B4B4"></div></div>
<div style="left:957px;top:91px;width:16px;height:176px;background:repeating-conic-gradient(#fff 0 25%, #D4D0C8 0 50%) 0 0/2px 2px;"></div>
<div style="left:957px;top:91px;width:16px;height:16px;background:#D4D0C8;"></div>
<div style="left:957px;top:91px;width:16px;height:1px;background:#D4D0C8;"></div>
<div style="left:957px;top:91px;width:1px;height:16px;background:#D4D0C8;"></div>
<div style="left:957px;top:106px;width:16px;height:1px;background:#404040;"></div>
<div style="left:972px;top:91px;width:1px;height:16px;background:#404040;"></div>
<div style="left:958px;top:92px;width:14px;height:1px;background:#FFFFFF;"></div>
<div style="left:958px;top:92px;width:1px;height:14px;background:#FFFFFF;"></div>
<div style="left:958px;top:105px;width:14px;height:1px;background:#808080;"></div>
<div style="left:971px;top:92px;width:1px;height:14px;background:#808080;"></div>
<svg style="left:0;top:0;width:985px;height:673px" width="985" height="673"><polygon points="961,101 969,101 965,97" fill="#000"/></svg>
<div style="left:957px;top:107px;width:16px;height:16px;background:#D4D0C8;"></div>
<div style="left:957px;top:107px;width:16px;height:1px;background:#D4D0C8;"></div>
<div style="left:957px;top:107px;width:1px;height:16px;background:#D4D0C8;"></div>
<div style="left:957px;top:122px;width:16px;height:1px;background:#404040;"></div>
<div style="left:972px;top:107px;width:1px;height:16px;background:#404040;"></div>
<div style="left:958px;top:108px;width:14px;height:1px;background:#FFFFFF;"></div>
<div style="left:958px;top:108px;width:1px;height:14px;background:#FFFFFF;"></div>
<div style="left:958px;top:121px;width:14px;height:1px;background:#808080;"></div>
<div style="left:971px;top:108px;width:1px;height:14px;background:#808080;"></div>
<div style="left:957px;top:251px;width:16px;height:16px;background:#D4D0C8;"></div>
<div style="left:957px;top:251px;width:16px;height:1px;background:#D4D0C8;"></div>
<div style="left:957px;top:251px;width:1px;height:16px;background:#D4D0C8;"></div>
<div style="left:957px;top:266px;width:16px;height:1px;background:#404040;"></div>
<div style="left:972px;top:251px;width:1px;height:16px;background:#404040;"></div>
<div style="left:958px;top:252px;width:14px;height:1px;background:#FFFFFF;"></div>
<div style="left:958px;top:252px;width:1px;height:14px;background:#FFFFFF;"></div>
<div style="left:958px;top:265px;width:14px;height:1px;background:#808080;"></div>
<div style="left:971px;top:252px;width:1px;height:14px;background:#808080;"></div>
<svg style="left:0;top:0;width:985px;height:673px" width="985" height="673"><polygon points="961,258 969,258 965,262" fill="#000"/></svg>
<div style="left:12px;top:267px;width:945px;height:16px;background:repeating-conic-gradient(#fff 0 25%, #D4D0C8 0 50%) 0 0/2px 2px;"></div>
<div style="left:12px;top:267px;width:16px;height:16px;background:#D4D0C8;"></div>
<div style="left:12px;top:267px;width:16px;height:1px;background:#D4D0C8;"></div>
<div style="left:12px;top:267px;width:1px;height:16px;background:#D4D0C8;"></div>
<div style="left:12px;top:282px;width:16px;height:1px;background:#404040;"></div>
<div style="left:27px;top:267px;width:1px;height:16px;background:#404040;"></div>
<div style="left:13px;top:268px;width:14px;height:1px;background:#FFFFFF;"></div>
<div style="left:13px;top:268px;width:1px;height:14px;background:#FFFFFF;"></div>
<div style="left:13px;top:281px;width:14px;height:1px;background:#808080;"></div>
<div style="left:26px;top:268px;width:1px;height:14px;background:#808080;"></div>
<svg style="left:0;top:0;width:985px;height:673px" width="985" height="673"><polygon points="21,271 21,279 17,275" fill="#000"/></svg>
<div style="left:861px;top:267px;width:16px;height:16px;background:#D4D0C8;"></div>
<div style="left:861px;top:267px;width:16px;height:1px;background:#D4D0C8;"></div>
<div style="left:861px;top:267px;width:1px;height:16px;background:#D4D0C8;"></div>
<div style="left:861px;top:282px;width:16px;height:1px;background:#404040;"></div>
<div style="left:876px;top:267px;width:1px;height:16px;background:#404040;"></div>
<div style="left:862px;top:268px;width:14px;height:1px;background:#FFFFFF;"></div>
<div style="left:862px;top:268px;width:1px;height:14px;background:#FFFFFF;"></div>
<div style="left:862px;top:281px;width:14px;height:1px;background:#808080;"></div>
<div style="left:875px;top:268px;width:1px;height:14px;background:#808080;"></div>
<div style="left:941px;top:267px;width:16px;height:16px;background:#D4D0C8;"></div>
<div style="left:941px;top:267px;width:16px;height:1px;background:#D4D0C8;"></div>
<div style="left:941px;top:267px;width:1px;height:16px;background:#D4D0C8;"></div>
<div style="left:941px;top:282px;width:16px;height:1px;background:#404040;"></div>
<div style="left:956px;top:267px;width:1px;height:16px;background:#404040;"></div>
<div style="left:942px;top:268px;width:14px;height:1px;background:#FFFFFF;"></div>
<div style="left:942px;top:268px;width:1px;height:14px;background:#FFFFFF;"></div>
<div style="left:942px;top:281px;width:14px;height:1px;background:#808080;"></div>
<div style="left:955px;top:268px;width:1px;height:14px;background:#808080;"></div>
<svg style="left:0;top:0;width:985px;height:673px" width="985" height="673"><polygon points="948,271 948,279 952,275" fill="#000"/></svg>
<div style="left:957px;top:267px;width:16px;height:16px;background:#D4D0C8;"></div>
<div style="left:10px;top:310px;width:669px;height:1px;background:#808080;"></div>
<div style="left:10px;top:310px;width:1px;height:130px;background:#808080;"></div>
<div style="left:10px;top:439px;width:669px;height:1px;background:#FFFFFF;"></div>
<div style="left:678px;top:310px;width:1px;height:130px;background:#FFFFFF;"></div>
<div style="left:11px;top:311px;width:667px;height:1px;background:#404040;"></div>
<div style="left:11px;top:311px;width:1px;height:128px;background:#404040;"></div>
<div style="left:11px;top:438px;width:667px;height:1px;background:#D4D0C8;"></div>
<div style="left:677px;top:311px;width:1px;height:128px;background:#D4D0C8;"></div>
<div style="left:12px;top:312px;width:665px;height:126px;background:#fff;"></div>
<div style="left:12px;top:328px;width:665px;height:16px;background:#0A246A;"></div>
<div class="t" style="left:14px;top:313px;font-size:13px;line-height:15px;color:#000;">Simple ASCII</div>
<div class="t" style="left:14px;top:329px;font-size:13px;line-height:15px;color:#fff;">Stanford Cluster</div>
<div class="t" style="left:14px;top:345px;font-size:13px;line-height:15px;color:#000;">Transpose matrix</div>
<div class="t" style="left:14px;top:361px;font-size:13px;line-height:15px;color:#000;">Subtract matrices</div>
<div style="left:681px;top:319px;width:169px;height:1px;background:#FFFFFF;"></div>
<div style="left:681px;top:319px;width:1px;height:121px;background:#FFFFFF;"></div>
<div style="left:681px;top:439px;width:169px;height:1px;background:#FFFFFF;"></div>
<div style="left:849px;top:319px;width:1px;height:121px;background:#FFFFFF;"></div>
<div style="left:680px;top:318px;width:169px;height:1px;background:#808080;"></div>
<div style="left:680px;top:318px;width:1px;height:121px;background:#808080;"></div>
<div style="left:680px;top:438px;width:169px;height:1px;background:#808080;"></div>
<div style="left:848px;top:318px;width:1px;height:121px;background:#808080;"></div>
<div style="left:681px;top:319px;width:167px;height:1px;background:#FFFFFF;"></div>
<div style="left:681px;top:319px;width:1px;height:119px;background:#FFFFFF;"></div>
<div style="left:686px;top:312px;width:70px;height:12px;background:#D4D0C8;"></div>
<div class="t" style="left:687px;top:311px;font-size:13px;line-height:15px;color:#000;">Parameters</div>
<div style="left:723px;top:330px;width:120px;height:1px;background:#808080;"></div>
<div style="left:723px;top:330px;width:1px;height:23px;background:#808080;"></div>
<div style="left:723px;top:352px;width:120px;height:1px;background:#FFFFFF;"></div>
<div style="left:842px;top:330px;width:1px;height:23px;background:#FFFFFF;"></div>
<div style="left:724px;top:331px;width:118px;height:1px;background:#404040;"></div>
<div style="left:724px;top:331px;width:1px;height:21px;background:#404040;"></div>
<div style="left:724px;top:351px;width:118px;height:1px;background:#D4D0C8;"></div>
<div style="left:841px;top:331px;width:1px;height:21px;background:#D4D0C8;"></div>
<div style="left:725px;top:332px;width:116px;height:19px;background:#fff;"></div>
<div class="t" style="left:725px;top:334px;font-size:13px;line-height:15px;color:#000;">0</div>
<div class="t" style="left:691px;top:334px;font-size:13px;line-height:15px;color:#000;">P1</div>
<div style="left:723px;top:350px;width:120px;height:1px;background:#808080;"></div>
<div style="left:723px;top:350px;width:1px;height:23px;background:#808080;"></div>
<div style="left:723px;top:372px;width:120px;height:1px;background:#FFFFFF;"></div>
<div style="left:842px;top:350px;width:1px;height:23px;background:#FFFFFF;"></div>
<div style="left:724px;top:351px;width:118px;height:1px;background:#404040;"></div>
<div style="left:724px;top:351px;width:1px;height:21px;background:#404040;"></div>
<div style="left:724px;top:371px;width:118px;height:1px;background:#D4D0C8;"></div>
<div style="left:841px;top:351px;width:1px;height:21px;background:#D4D0C8;"></div>
<div style="left:725px;top:352px;width:116px;height:19px;background:#fff;"></div>
<div class="t" style="left:725px;top:354px;font-size:13px;line-height:15px;color:#000;">0</div>
<div class="t" style="left:691px;top:354px;font-size:13px;line-height:15px;color:#000;">P2</div>
<div style="left:723px;top:370px;width:120px;height:1px;background:#808080;"></div>
<div style="left:723px;top:370px;width:1px;height:23px;background:#808080;"></div>
<div style="left:723px;top:392px;width:120px;height:1px;background:#FFFFFF;"></div>
<div style="left:842px;top:370px;width:1px;height:23px;background:#FFFFFF;"></div>
<div style="left:724px;top:371px;width:118px;height:1px;background:#404040;"></div>
<div style="left:724px;top:371px;width:1px;height:21px;background:#404040;"></div>
<div style="left:724px;top:391px;width:118px;height:1px;background:#D4D0C8;"></div>
<div style="left:841px;top:371px;width:1px;height:21px;background:#D4D0C8;"></div>
<div style="left:725px;top:372px;width:116px;height:19px;background:#fff;"></div>
<div class="t" style="left:725px;top:374px;font-size:13px;line-height:15px;color:#000;">0</div>
<div class="t" style="left:691px;top:374px;font-size:13px;line-height:15px;color:#000;">P3</div>
<div style="left:723px;top:390px;width:120px;height:1px;background:#808080;"></div>
<div style="left:723px;top:390px;width:1px;height:23px;background:#808080;"></div>
<div style="left:723px;top:412px;width:120px;height:1px;background:#FFFFFF;"></div>
<div style="left:842px;top:390px;width:1px;height:23px;background:#FFFFFF;"></div>
<div style="left:724px;top:391px;width:118px;height:1px;background:#404040;"></div>
<div style="left:724px;top:391px;width:1px;height:21px;background:#404040;"></div>
<div style="left:724px;top:411px;width:118px;height:1px;background:#D4D0C8;"></div>
<div style="left:841px;top:391px;width:1px;height:21px;background:#D4D0C8;"></div>
<div style="left:725px;top:392px;width:116px;height:19px;background:#fff;"></div>
<div class="t" style="left:725px;top:394px;font-size:13px;line-height:15px;color:#000;">0</div>
<div class="t" style="left:691px;top:394px;font-size:13px;line-height:15px;color:#000;">P4</div>
<div style="left:723px;top:410px;width:120px;height:1px;background:#808080;"></div>
<div style="left:723px;top:410px;width:1px;height:23px;background:#808080;"></div>
<div style="left:723px;top:432px;width:120px;height:1px;background:#FFFFFF;"></div>
<div style="left:842px;top:410px;width:1px;height:23px;background:#FFFFFF;"></div>
<div style="left:724px;top:411px;width:118px;height:1px;background:#404040;"></div>
<div style="left:724px;top:411px;width:1px;height:21px;background:#404040;"></div>
<div style="left:724px;top:431px;width:118px;height:1px;background:#D4D0C8;"></div>
<div style="left:841px;top:411px;width:1px;height:21px;background:#D4D0C8;"></div>
<div style="left:725px;top:412px;width:116px;height:19px;background:#fff;"></div>
<div class="t" style="left:725px;top:414px;font-size:13px;line-height:15px;color:#000;">0</div>
<div class="t" style="left:691px;top:414px;font-size:13px;line-height:15px;color:#000;">P5</div>
<div style="left:851px;top:318px;width:124px;height:1px;background:#FFFFFF;"></div>
<div style="left:851px;top:318px;width:1px;height:122px;background:#FFFFFF;"></div>
<div style="left:851px;top:439px;width:124px;height:1px;background:#FFFFFF;"></div>
<div style="left:974px;top:318px;width:1px;height:122px;background:#FFFFFF;"></div>
<div style="left:850px;top:317px;width:124px;height:1px;background:#808080;"></div>
<div style="left:850px;top:317px;width:1px;height:122px;background:#808080;"></div>
<div style="left:850px;top:438px;width:124px;height:1px;background:#808080;"></div>
<div style="left:973px;top:317px;width:1px;height:122px;background:#808080;"></div>
<div style="left:851px;top:318px;width:122px;height:1px;background:#FFFFFF;"></div>
<div style="left:851px;top:318px;width:1px;height:120px;background:#FFFFFF;"></div>
<div style="left:858px;top:334px;width:111px;height:25px;background:#D4D0C8;"></div>
<div style="left:858px;top:334px;width:111px;height:1px;background:#FFFFFF;"></div>
<div style="left:858px;top:334px;width:1px;height:25px;background:#FFFFFF;"></div>
<div style="left:858px;top:358px;width:111px;height:1px;background:#404040;"></div>
<div style="left:968px;top:334px;width:1px;height:25px;background:#404040;"></div>
<div style="left:859px;top:335px;width:109px;height:1px;background:#D4D0C8;"></div>
<div style="left:859px;top:335px;width:1px;height:23px;background:#D4D0C8;"></div>
<div style="left:859px;top:357px;width:109px;height:1px;background:#808080;"></div>
<div style="left:967px;top:335px;width:1px;height:23px;background:#808080;"></div>
<div class="t" style="left:858px;top:339px;font-size:13px;line-height:15px;color:#000;width:111px;text-align:center;">Go !</div>
<div style="left:858px;top:364px;width:111px;height:22px;background:#D4D0C8;"></div>
<div style="left:858px;top:364px;width:111px;height:1px;background:#FFFFFF;"></div>
<div style="left:858px;top:364px;width:1px;height:22px;background:#FFFFFF;"></div>
<div style="left:858px;top:385px;width:111px;height:1px;background:#404040;"></div>
<div style="left:968px;top:364px;width:1px;height:22px;background:#404040;"></div>
<div style="left:859px;top:365px;width:109px;height:1px;background:#D4D0C8;"></div>
<div style="left:859px;top:365px;width:1px;height:20px;background:#D4D0C8;"></div>
<div style="left:859px;top:384px;width:109px;height:1px;background:#808080;"></div>
<div style="left:967px;top:365px;width:1px;height:20px;background:#808080;"></div>
<div style="left:858px;top:391px;width:111px;height:22px;background:#D4D0C8;"></div>
<div style="left:858px;top:391px;width:111px;height:1px;background:#FFFFFF;"></div>
<div style="left:858px;top:391px;width:1px;height:22px;background:#FFFFFF;"></div>
<div style="left:858px;top:412px;width:111px;height:1px;background:#404040;"></div>
<div style="left:968px;top:391px;width:1px;height:22px;background:#404040;"></div>
<div style="left:859px;top:392px;width:109px;height:1px;background:#D4D0C8;"></div>
<div style="left:859px;top:392px;width:1px;height:20px;background:#D4D0C8;"></div>
<div style="left:859px;top:411px;width:109px;height:1px;background:#808080;"></div>
<div style="left:967px;top:392px;width:1px;height:20px;background:#808080;"></div>
<div class="t" style="left:895px;top:368px;font-size:13px;line-height:15px;color:#000;">Save filter</div>
<div class="t" style="left:895px;top:395px;font-size:13px;line-height:15px;color:#000;">Load filter</div>
<svg style="left:876px;top:365px;width:24px;height:24px" width="24" height="24" shape-rendering="crispEdges"><rect x="0" y="2" width="6" height="1" fill="#000"/><rect x="0" y="2" width="1" height="12" fill="#000"/><rect x="0" y="13" width="10" height="1" fill="#000"/><rect x="9" y="6" width="1" height="8" fill="#000"/><rect x="1" y="3" width="5" height="10" fill="#fff"/><rect x="6" y="4" width="1" height="9" fill="#fff"/><rect x="7" y="5" width="1" height="8" fill="#fff"/><rect x="8" y="6" width="1" height="7" fill="#fff"/><rect x="6" y="3" width="1" height="1" fill="#000"/><rect x="7" y="4" width="1" height="1" fill="#000"/><rect x="8" y="5" width="1" height="1" fill="#000"/><rect x="5" y="3" width="1" height="3" fill="#000"/><rect x="5" y="5" width="4" height="1" fill="#000"/><rect x="2" y="5" width="2" height="1" fill="#000"/><rect x="2" y="7" width="2" height="1" fill="#000"/><rect x="5" y="7" width="3" height="1" fill="#000"/><rect x="2" y="9" width="2" height="1" fill="#000"/><rect x="5" y="9" width="3" height="1" fill="#000"/><rect x="2" y="11" width="6" height="1" fill="#000"/><rect x="8" y="2" width="4" height="1" fill="#e00000"/><rect x="9" y="3" width="5" height="1" fill="#e00000"/><rect x="11" y="4" width="3" height="1" fill="#e00000"/><rect x="9" y="5" width="7" height="1" fill="#e00000"/><rect x="10" y="6" width="5" height="1" fill="#e00000"/><rect x="11" y="7" width="3" height="1" fill="#e00000"/><rect x="12" y="8" width="1" height="1" fill="#a02080"/><rect x="8" y="10" width="8" height="8" fill="#000"/><rect x="10" y="10" width="4" height="3" fill="#fff"/><rect x="11" y="15" width="2" height="3" fill="#fff"/></svg>
<svg style="left:874px;top:392px;width:24px;height:24px" width="24" height="24" shape-rendering="crispEdges"><rect x="13" y="0" width="2" height="1" fill="#f0f080"/><rect x="12" y="1" width="2" height="1" fill="#f0f080"/><rect x="11" y="2" width="2" height="1" fill="#e8e860"/><rect x="1" y="4" width="2" height="1" fill="#f0f0a0"/><rect x="2" y="5" width="2" height="1" fill="#f0f0a0"/><rect x="0" y="12" width="2" height="1" fill="#f0f0a0"/><rect x="3" y="14" width="1" height="2" fill="#f0f0a0"/><rect x="14" y="6" width="1" height="2" fill="#f0f0a0"/><rect x="5" y="4" width="6" height="1" fill="#000"/><rect x="5" y="4" width="1" height="12" fill="#000"/><rect x="5" y="15" width="10" height="1" fill="#000"/><rect x="14" y="8" width="1" height="8" fill="#000"/><rect x="6" y="5" width="5" height="10" fill="#fff"/><rect x="11" y="6" width="1" height="9" fill="#fff"/><rect x="12" y="7" width="1" height="8" fill="#fff"/><rect x="13" y="8" width="1" height="7" fill="#fff"/><rect x="11" y="5" width="1" height="1" fill="#000"/><rect x="12" y="6" width="1" height="1" fill="#000"/><rect x="13" y="7" width="1" height="1" fill="#000"/><rect x="10" y="5" width="1" height="3" fill="#000"/><rect x="10" y="7" width="4" height="1" fill="#000"/><rect x="7" y="7" width="2" height="1" fill="#000"/><rect x="7" y="9" width="2" height="1" fill="#000"/><rect x="10" y="9" width="3" height="1" fill="#000"/><rect x="7" y="11" width="2" height="1" fill="#000"/><rect x="10" y="11" width="3" height="1" fill="#000"/><rect x="7" y="13" width="6" height="1" fill="#000"/></svg>
<div style="left:10px;top:466px;width:965px;height:1px;background:#808080;"></div>
<div style="left:10px;top:466px;width:1px;height:139px;background:#808080;"></div>
<div style="left:10px;top:604px;width:965px;height:1px;background:#FFFFFF;"></div>
<div style="left:974px;top:466px;width:1px;height:139px;background:#FFFFFF;"></div>
<div style="left:11px;top:467px;width:963px;height:1px;background:#404040;"></div>
<div style="left:11px;top:467px;width:1px;height:137px;background:#404040;"></div>
<div style="left:11px;top:603px;width:963px;height:1px;background:#D4D0C8;"></div>
<div style="left:973px;top:467px;width:1px;height:137px;background:#D4D0C8;"></div>
<div style="left:12px;top:468px;width:945px;height:119px;overflow:hidden"><div style="left:0px;top:0px;width:945px;height:119px;background:#fff"></div><div style="left:0px;top:0px;width:70px;height:20px;background:#D4D0C8"></div><div style="left:0px;top:0px;width:70px;height:1px;background:#FFFFFF"></div><div style="left:0px;top:0px;width:1px;height:20px;background:#FFFFFF"></div><div style="left:0px;top:19px;width:70px;height:1px;background:#808080"></div><div style="left:69px;top:0px;width:1px;height:20px;background:#808080"></div><div style="left:70px;top:0px;width:1px;height:21px;background:#000"></div><div style="left:0px;top:20px;width:71px;height:1px;background:#000"></div><div style="left:71px;top:0px;width:120px;height:20px;background:#D4D0C8"></div><div style="left:71px;top:0px;width:120px;height:1px;background:#FFFFFF"></div><div style="left:71px;top:0px;width:1px;height:20px;background:#FFFFFF"></div><div style="left:71px;top:19px;width:120px;height:1px;background:#808080"></div><div style="left:190px;top:0px;width:1px;height:20px;background:#808080"></div><div style="left:191px;top:0px;width:1px;height:21px;background:#000"></div><div style="left:71px;top:20px;width:121px;height:1px;background:#000"></div><div class="t c" style="left:73px;top:3px;width:118px;color:#000">Reporter-ID</div><div style="left:192px;top:0px;width:126px;height:20px;background:#D4D0C8"></div><div style="left:192px;top:0px;width:126px;height:1px;background:#FFFFFF"></div><div style="left:192px;top:0px;width:1px;height:20px;background:#FFFFFF"></div><div style="left:192px;top:19px;width:126px;height:1px;background:#808080"></div><div style="left:317px;top:0px;width:1px;height:20px;background:#808080"></div><div style="left:318px;top:0px;width:1px;height:21px;background:#000"></div><div style="left:192px;top:20px;width:127px;height:1px;background:#000"></div><div class="t c" style="left:194px;top:3px;width:124px;color:#000">1. Data</div><div style="left:319px;top:0px;width:70px;height:20px;background:#D4D0C8"></div><div style="left:319px;top:0px;width:70px;height:1px;background:#FFFFFF"></div><div style="left:319px;top:0px;width:1px;height:20px;background:#FFFFFF"></div><div style="left:319px;top:19px;width:70px;height:1px;background:#808080"></div><div style="left:388px;top:0px;width:1px;height:20px;background:#808080"></div><div style="left:389px;top:0px;width:1px;height:21px;background:#000"></div><div style="left:319px;top:20px;width:71px;height:1px;background:#000"></div><div class="t c" style="left:321px;top:3px;width:68px;color:#000">2. Data</div><div style="left:390px;top:0px;width:70px;height:20px;background:#D4D0C8"></div><div style="left:390px;top:0px;width:70px;height:1px;background:#FFFFFF"></div><div style="left:390px;top:0px;width:1px;height:20px;background:#FFFFFF"></div><div style="left:390px;top:19px;width:70px;height:1px;background:#808080"></div><div style="left:459px;top:0px;width:1px;height:20px;background:#808080"></div><div style="left:460px;top:0px;width:1px;height:21px;background:#000"></div><div style="left:390px;top:20px;width:71px;height:1px;background:#000"></div><div class="t c" style="left:392px;top:3px;width:68px;color:#000">3. Data</div><div style="left:461px;top:0px;width:70px;height:20px;background:#D4D0C8"></div><div style="left:461px;top:0px;width:70px;height:1px;background:#FFFFFF"></div><div style="left:461px;top:0px;width:1px;height:20px;background:#FFFFFF"></div><div style="left:461px;top:19px;width:70px;height:1px;background:#808080"></div><div style="left:530px;top:0px;width:1px;height:20px;background:#808080"></div><div style="left:531px;top:0px;width:1px;height:21px;background:#000"></div><div style="left:461px;top:20px;width:71px;height:1px;background:#000"></div><div class="t c" style="left:463px;top:3px;width:68px;color:#000">4. Data</div><div style="left:532px;top:0px;width:70px;height:20px;background:#D4D0C8"></div><div style="left:532px;top:0px;width:70px;height:1px;background:#FFFFFF"></div><div style="left:532px;top:0px;width:1px;height:20px;background:#FFFFFF"></div><div style="left:532px;top:19px;width:70px;height:1px;background:#808080"></div><div style="left:601px;top:0px;width:1px;height:20px;background:#808080"></div><div style="left:602px;top:0px;width:1px;height:21px;background:#000"></div><div style="left:532px;top:20px;width:71px;height:1px;background:#000"></div><div class="t c" style="left:534px;top:3px;width:68px;color:#000">5. Data</div><div style="left:603px;top:0px;width:70px;height:20px;background:#D4D0C8"></div><div style="left:603px;top:0px;width:70px;height:1px;background:#FFFFFF"></div><div style="left:603px;top:0px;width:1px;height:20px;background:#FFFFFF"></div><div style="left:603px;top:19px;width:70px;height:1px;background:#808080"></div><div style="left:672px;top:0px;width:1px;height:20px;background:#808080"></div><div style="left:673px;top:0px;width:1px;height:21px;background:#000"></div><div style="left:603px;top:20px;width:71px;height:1px;background:#000"></div><div class="t c" style="left:605px;top:3px;width:68px;color:#000">6. Data</div><div style="left:674px;top:0px;width:70px;height:20px;background:#D4D0C8"></div><div style="left:674px;top:0px;width:70px;height:1px;background:#FFFFFF"></div><div style="left:674px;top:0px;width:1px;height:20px;background:#FFFFFF"></div><div style="left:674px;top:19px;width:70px;height:1px;background:#808080"></div><div style="left:743px;top:0px;width:1px;height:20px;background:#808080"></div><div style="left:744px;top:0px;width:1px;height:21px;background:#000"></div><div style="left:674px;top:20px;width:71px;height:1px;background:#000"></div><div class="t c" style="left:676px;top:3px;width:68px;color:#000">7. Data</div><div style="left:745px;top:0px;width:70px;height:20px;background:#D4D0C8"></div><div style="left:745px;top:0px;width:70px;height:1px;background:#FFFFFF"></div><div style="left:745px;top:0px;width:1px;height:20px;background:#FFFFFF"></div><div style="left:745px;top:19px;width:70px;height:1px;background:#808080"></div><div style="left:814px;top:0px;width:1px;height:20px;background:#808080"></div><div style="left:815px;top:0px;width:1px;height:21px;background:#000"></div><div style="left:745px;top:20px;width:71px;height:1px;background:#000"></div><div class="t c" style="left:747px;top:3px;width:68px;color:#000">8. Data</div><div style="left:816px;top:0px;width:70px;height:20px;background:#D4D0C8"></div><div style="left:816px;top:0px;width:70px;height:1px;background:#FFFFFF"></div><div style="left:816px;top:0px;width:1px;height:20px;background:#FFFFFF"></div><div style="left:816px;top:19px;width:70px;height:1px;background:#808080"></div><div style="left:885px;top:0px;width:1px;height:20px;background:#808080"></div><div style="left:886px;top:0px;width:1px;height:21px;background:#000"></div><div style="left:816px;top:20px;width:71px;height:1px;background:#000"></div><div class="t c" style="left:818px;top:3px;width:68px;color:#000">9. Data</div><div style="left:887px;top:0px;width:70px;height:20px;background:#D4D0C8"></div><div style="left:887px;top:0px;width:70px;height:1px;background:#FFFFFF"></div><div style="left:887px;top:0px;width:1px;height:20px;background:#FFFFFF"></div><div style="left:887px;top:19px;width:70px;height:1px;background:#808080"></div><div style="left:956px;top:0px;width:1px;height:20px;background:#808080"></div><div style="left:957px;top:0px;width:1px;height:21px;background:#000"></div><div style="left:887px;top:20px;width:71px;height:1px;background:#000"></div><div class="t c" style="left:889px;top:3px;width:68px;color:#000">10. Data</div><div style="left:958px;top:0px;width:70px;height:20px;background:#D4D0C8"></div><div style="left:958px;top:0px;width:70px;height:1px;background:#FFFFFF"></div><div style="left:958px;top:0px;width:1px;height:20px;background:#FFFFFF"></div><div style="left:958px;top:19px;width:70px;height:1px;background:#808080"></div><div style="left:1027px;top:0px;width:1px;height:20px;background:#808080"></div><div style="left:1028px;top:0px;width:1px;height:21px;background:#000"></div><div style="left:958px;top:20px;width:71px;height:1px;background:#000"></div><div class="t c" style="left:960px;top:3px;width:68px;color:#000">11. Data</div><div style="left:0px;top:21px;width:70px;height:20px;background:#D4D0C8"></div><div style="left:0px;top:21px;width:70px;height:1px;background:#FFFFFF"></div><div style="left:0px;top:21px;width:1px;height:20px;background:#FFFFFF"></div><div style="left:0px;top:40px;width:70px;height:1px;background:#808080"></div><div style="left:69px;top:21px;width:1px;height:20px;background:#808080"></div><div style="left:70px;top:21px;width:1px;height:21px;background:#000"></div><div style="left:0px;top:41px;width:71px;height:1px;background:#000"></div><div style="left:71px;top:21px;width:120px;height:20px;background:#D4D0C8"></div><div style="left:71px;top:21px;width:120px;height:1px;background:#FFFFFF"></div><div style="left:71px;top:21px;width:1px;height:20px;background:#FFFFFF"></div><div style="left:71px;top:40px;width:120px;height:1px;background:#808080"></div><div style="left:190px;top:21px;width:1px;height:20px;background:#808080"></div><div style="left:191px;top:21px;width:1px;height:21px;background:#000"></div><div style="left:71px;top:41px;width:121px;height:1px;background:#000"></div><div class="t c" style="left:73px;top:24px;width:118px;color:#000">-&gt;45</div><div style="left:192px;top:21px;width:126px;height:20px;background:#D4D0C8"></div><div style="left:192px;top:21px;width:126px;height:1px;background:#FFFFFF"></div><div style="left:192px;top:21px;width:1px;height:20px;background:#FFFFFF"></div><div style="left:192px;top:40px;width:126px;height:1px;background:#808080"></div><div style="left:317px;top:21px;width:1px;height:20px;background:#808080"></div><div style="left:318px;top:21px;width:1px;height:21px;background:#000"></div><div style="left:192px;top:41px;width:127px;height:1px;background:#000"></div><div class="t c" style="left:194px;top:24px;width:124px;color:#000">-&gt;43</div><div style="left:319px;top:21px;width:70px;height:20px;background:#D4D0C8"></div><div style="left:319px;top:21px;width:70px;height:1px;background:#FFFFFF"></div><div style="left:319px;top:21px;width:1px;height:20px;background:#FFFFFF"></div><div style="left:319px;top:40px;width:70px;height:1px;background:#808080"></div><div style="left:388px;top:21px;width:1px;height:20px;background:#808080"></div><div style="left:389px;top:21px;width:1px;height:21px;background:#000"></div><div style="left:319px;top:41px;width:71px;height:1px;background:#000"></div><div class="t c" style="left:321px;top:24px;width:68px;color:#000">-&gt;0</div><div style="left:390px;top:21px;width:70px;height:20px;background:#D4D0C8"></div><div style="left:390px;top:21px;width:70px;height:1px;background:#FFFFFF"></div><div style="left:390px;top:21px;width:1px;height:20px;background:#FFFFFF"></div><div style="left:390px;top:40px;width:70px;height:1px;background:#808080"></div><div style="left:459px;top:21px;width:1px;height:20px;background:#808080"></div><div style="left:460px;top:21px;width:1px;height:21px;background:#000"></div><div style="left:390px;top:41px;width:71px;height:1px;background:#000"></div><div class="t c" style="left:392px;top:24px;width:68px;color:#000">-&gt;0</div><div style="left:461px;top:21px;width:70px;height:20px;background:#D4D0C8"></div><div style="left:461px;top:21px;width:70px;height:1px;background:#FFFFFF"></div><div style="left:461px;top:21px;width:1px;height:20px;background:#FFFFFF"></div><div style="left:461px;top:40px;width:70px;height:1px;background:#808080"></div><div style="left:530px;top:21px;width:1px;height:20px;background:#808080"></div><div style="left:531px;top:21px;width:1px;height:21px;background:#000"></div><div style="left:461px;top:41px;width:71px;height:1px;background:#000"></div><div class="t c" style="left:463px;top:24px;width:68px;color:#000">-&gt;0</div><div style="left:532px;top:21px;width:70px;height:20px;background:#D4D0C8"></div><div style="left:532px;top:21px;width:70px;height:1px;background:#FFFFFF"></div><div style="left:532px;top:21px;width:1px;height:20px;background:#FFFFFF"></div><div style="left:532px;top:40px;width:70px;height:1px;background:#808080"></div><div style="left:601px;top:21px;width:1px;height:20px;background:#808080"></div><div style="left:602px;top:21px;width:1px;height:21px;background:#000"></div><div style="left:532px;top:41px;width:71px;height:1px;background:#000"></div><div class="t c" style="left:534px;top:24px;width:68px;color:#000">-&gt;0</div><div style="left:603px;top:21px;width:70px;height:20px;background:#D4D0C8"></div><div style="left:603px;top:21px;width:70px;height:1px;background:#FFFFFF"></div><div style="left:603px;top:21px;width:1px;height:20px;background:#FFFFFF"></div><div style="left:603px;top:40px;width:70px;height:1px;background:#808080"></div><div style="left:672px;top:21px;width:1px;height:20px;background:#808080"></div><div style="left:673px;top:21px;width:1px;height:21px;background:#000"></div><div style="left:603px;top:41px;width:71px;height:1px;background:#000"></div><div class="t c" style="left:605px;top:24px;width:68px;color:#000">-&gt;0</div><div style="left:674px;top:21px;width:70px;height:20px;background:#D4D0C8"></div><div style="left:674px;top:21px;width:70px;height:1px;background:#FFFFFF"></div><div style="left:674px;top:21px;width:1px;height:20px;background:#FFFFFF"></div><div style="left:674px;top:40px;width:70px;height:1px;background:#808080"></div><div style="left:743px;top:21px;width:1px;height:20px;background:#808080"></div><div style="left:744px;top:21px;width:1px;height:21px;background:#000"></div><div style="left:674px;top:41px;width:71px;height:1px;background:#000"></div><div class="t c" style="left:676px;top:24px;width:68px;color:#000">-&gt;0</div><div style="left:745px;top:21px;width:70px;height:20px;background:#D4D0C8"></div><div style="left:745px;top:21px;width:70px;height:1px;background:#FFFFFF"></div><div style="left:745px;top:21px;width:1px;height:20px;background:#FFFFFF"></div><div style="left:745px;top:40px;width:70px;height:1px;background:#808080"></div><div style="left:814px;top:21px;width:1px;height:20px;background:#808080"></div><div style="left:815px;top:21px;width:1px;height:21px;background:#000"></div><div style="left:745px;top:41px;width:71px;height:1px;background:#000"></div><div class="t c" style="left:747px;top:24px;width:68px;color:#000">-&gt;0</div><div style="left:816px;top:21px;width:70px;height:20px;background:#D4D0C8"></div><div style="left:816px;top:21px;width:70px;height:1px;background:#FFFFFF"></div><div style="left:816px;top:21px;width:1px;height:20px;background:#FFFFFF"></div><div style="left:816px;top:40px;width:70px;height:1px;background:#808080"></div><div style="left:885px;top:21px;width:1px;height:20px;background:#808080"></div><div style="left:886px;top:21px;width:1px;height:21px;background:#000"></div><div style="left:816px;top:41px;width:71px;height:1px;background:#000"></div><div class="t c" style="left:818px;top:24px;width:68px;color:#000">-&gt;0</div><div style="left:887px;top:21px;width:70px;height:20px;background:#D4D0C8"></div><div style="left:887px;top:21px;width:70px;height:1px;background:#FFFFFF"></div><div style="left:887px;top:21px;width:1px;height:20px;background:#FFFFFF"></div><div style="left:887px;top:40px;width:70px;height:1px;background:#808080"></div><div style="left:956px;top:21px;width:1px;height:20px;background:#808080"></div><div style="left:957px;top:21px;width:1px;height:21px;background:#000"></div><div style="left:887px;top:41px;width:71px;height:1px;background:#000"></div><div class="t c" style="left:889px;top:24px;width:68px;color:#000">-&gt;0</div><div style="left:958px;top:21px;width:70px;height:20px;background:#D4D0C8"></div><div style="left:958px;top:21px;width:70px;height:1px;background:#FFFFFF"></div><div style="left:958px;top:21px;width:1px;height:20px;background:#FFFFFF"></div><div style="left:958px;top:40px;width:70px;height:1px;background:#808080"></div><div style="left:1027px;top:21px;width:1px;height:20px;background:#808080"></div><div style="left:1028px;top:21px;width:1px;height:21px;background:#000"></div><div style="left:958px;top:41px;width:71px;height:1px;background:#000"></div><div class="t c" style="left:960px;top:24px;width:68px;color:#000">-&gt;0</div><div style="left:0px;top:42px;width:70px;height:20px;background:#D4D0C8"></div><div style="left:0px;top:42px;width:70px;height:1px;background:#FFFFFF"></div><div style="left:0px;top:42px;width:1px;height:20px;background:#FFFFFF"></div><div style="left:0px;top:61px;width:70px;height:1px;background:#808080"></div><div style="left:69px;top:42px;width:1px;height:20px;background:#808080"></div><div style="left:70px;top:42px;width:1px;height:21px;background:#000"></div><div style="left:0px;top:62px;width:71px;height:1px;background:#000"></div><div class="t c" style="left:2px;top:45px;width:68px;color:#000">1</div><div style="left:191px;top:42px;width:1px;height:21px;background:#B4B4B4"></div><div style="left:71px;top:62px;width:121px;height:1px;background:#B4B4B4"></div><div class="t c" style="left:73px;top:45px;width:118px;color:#000">Comment</div><div style="left:318px;top:42px;width:1px;height:21px;background:#B4B4B4"></div><div style="left:192px;top:62px;width:127px;height:1px;background:#B4B4B4"></div><div class="t c" style="left:194px;top:45px;width:124px;color:#000">Comp_Log2_Ratio</div><div style="left:192px;top:42px;width:126px;height:20px;border:1px dotted #000"></div><div style="left:389px;top:42px;width:1px;height:21px;background:#B4B4B4"></div><div style="left:319px;top:62px;width:71px;height:1px;background:#B4B4B4"></div><div style="left:460px;top:42px;width:1px;height:21px;background:#B4B4B4"></div><div style="left:390px;top:62px;width:71px;height:1px;background:#B4B4B4"></div><div style="left:531px;top:42px;width:1px;height:21px;background:#B4B4B4"></div><div style="left:461px;top:62px;width:71px;height:1px;background:#B4B4B4"></div><div style="left:602px;top:42px;width:1px;height:21px;background:#B4B4B4"></div><div style="left:532px;top:62px;width:71px;height:1px;background:#B4B4B4"></div><div style="left:673px;top:42px;width:1px;height:21px;background:#B4B4B4"></div><div style="left:603px;top:62px;width:71px;height:1px;background:#B4B4B4"></div><div style="left:744px;top:42px;width:1px;height:21px;background:#B4B4B4"></div><div style="left:674px;top:62px;width:71px;height:1px;background:#B4B4B4"></div><div style="left:815px;top:42px;width:1px;height:21px;background:#B4B4B4"></div><div style="left:745px;top:62px;width:71px;height:1px;background:#B4B4B4"></div><div style="left:886px;top:42px;width:1px;height:21px;background:#B4B4B4"></div><div style="left:816px;top:62px;width:71px;height:1px;background:#B4B4B4"></div><div style="left:957px;top:42px;width:1px;height:21px;background:#B4B4B4"></div><div style="left:887px;top:62px;width:71px;height:1px;background:#B4B4B4"></div><div style="left:1028px;top:42px;width:1px;height:21px;background:#B4B4B4"></div><div style="left:958px;top:62px;width:71px;height:1px;background:#B4B4B4"></div><div style="left:0px;top:63px;width:70px;height:20px;background:#D4D0C8"></div><div style="left:0px;top:63px;width:70px;height:1px;background:#FFFFFF"></div><div style="left:0px;top:63px;width:1px;height:20px;background:#FFFFFF"></div><div style="left:0px;top:82px;width:70px;height:1px;background:#808080"></div><div style="left:69px;top:63px;width:1px;height:20px;background:#808080"></div><div style="left:70px;top:63px;width:1px;height:21px;background:#000"></div><div style="left:0px;top:83px;width:71px;height:1px;background:#000"></div><div class="t c" style="left:2px;top:66px;width:68px;color:#000">2</div><div style="left:191px;top:63px;width:1px;height:21px;background:#B4B4B4"></div><div style="left:71px;top:83px;width:121px;height:1px;background:#B4B4B4"></div><div class="t c" style="left:73px;top:66px;width:118px;color:#000"><span style="letter-spacing:-0.3px">15b8|||||al049660|||||c</span></div><div style="left:318px;top:63px;width:1px;height:21px;background:#B4B4B4"></div><div style="left:192px;top:83px;width:127px;height:1px;background:#B4B4B4"></div><div class="t c" style="left:194px;top:66px;width:124px;color:#000">  -0.26</div><div style="left:389px;top:63px;width:1px;height:21px;background:#B4B4B4"></div><div style="left:319px;top:83px;width:71px;height:1px;background:#B4B4B4"></div><div style="left:460px;top:63px;width:1px;height:21px;background:#B4B4B4"></div><div style="left:390px;top:83px;width:71px;height:1px;background:#B4B4B4"></div><div style="left:531px;top:63px;width:1px;height:21px;background:#B4B4B4"></div><div style="left:461px;top:83px;width:71px;height:1px;background:#B4B4B4"></div><div style="left:602px;top:63px;width:1px;height:21px;background:#B4B4B4"></div><div style="left:532px;top:83px;width:71px;height:1px;background:#B4B4B4"></div><div style="left:673px;top:63px;width:1px;height:21px;background:#B4B4B4"></div><div style="left:603px;top:83px;width:71px;height:1px;background:#B4B4B4"></div><div style="left:744px;top:63px;width:1px;height:21px;background:#B4B4B4"></div><div style="left:674px;top:83px;width:71px;height:1px;background:#B4B4B4"></div><div style="left:815px;top:63px;width:1px;height:21px;background:#B4B4B4"></div><div style="left:745px;top:83px;width:71px;height:1px;background:#B4B4B4"></div><div style="left:886px;top:63px;width:1px;height:21px;background:#B4B4B4"></div><div style="left:816px;top:83px;width:71px;height:1px;background:#B4B4B4"></div><div style="left:957px;top:63px;width:1px;height:21px;background:#B4B4B4"></div><div style="left:887px;top:83px;width:71px;height:1px;background:#B4B4B4"></div><div style="left:1028px;top:63px;width:1px;height:21px;background:#B4B4B4"></div><div style="left:958px;top:83px;width:71px;height:1px;background:#B4B4B4"></div><div style="left:0px;top:84px;width:70px;height:20px;background:#D4D0C8"></div><div style="left:0px;top:84px;width:70px;height:1px;background:#FFFFFF"></div><div style="left:0px;top:84px;width:1px;height:20px;background:#FFFFFF"></div><div style="left:0px;top:103px;width:70px;height:1px;background:#808080"></div><div style="left:69px;top:84px;width:1px;height:20px;background:#808080"></div><div style="left:70px;top:84px;width:1px;height:21px;background:#000"></div><div style="left:0px;top:104px;width:71px;height:1px;background:#000"></div><div class="t c" style="left:2px;top:87px;width:68px;color:#000">3</div><div style="left:191px;top:84px;width:1px;height:21px;background:#B4B4B4"></div><div style="left:71px;top:104px;width:121px;height:1px;background:#B4B4B4"></div><div class="t c" style="left:73px;top:87px;width:118px;color:#000"><span style="letter-spacing:-0.3px">15b8|||||al049660|||||c</span></div><div style="left:318px;top:84px;width:1px;height:21px;background:#B4B4B4"></div><div style="left:192px;top:104px;width:127px;height:1px;background:#B4B4B4"></div><div class="t c" style="left:194px;top:87px;width:124px;color:#000">  -0.26</div><div style="left:389px;top:84px;width:1px;height:21px;background:#B4B4B4"></div><div style="left:319px;top:104px;width:71px;height:1px;background:#B4B4B4"></div><div style="left:460px;top:84px;width:1px;height:21px;background:#B4B4B4"></div><div style="left:390px;top:104px;width:71px;height:1px;background:#B4B4B4"></div><div style="left:531px;top:84px;width:1px;height:21px;background:#B4B4B4"></div><div style="left:461px;top:104px;width:71px;height:1px;background:#B4B4B4"></div><div style="left:602px;top:84px;width:1px;height:21px;background:#B4B4B4"></div><div style="left:532px;top:104px;width:71px;height:1px;background:#B4B4B4"></div><div style="left:673px;top:84px;width:1px;height:21px;background:#B4B4B4"></div><div style="left:603px;top:104px;width:71px;height:1px;background:#B4B4B4"></div><div style="left:744px;top:84px;width:1px;height:21px;background:#B4B4B4"></div><div style="left:674px;top:104px;width:71px;height:1px;background:#B4B4B4"></div><div style="left:815px;top:84px;width:1px;height:21px;background:#B4B4B4"></div><div style="left:745px;top:104px;width:71px;height:1px;background:#B4B4B4"></div><div style="left:886px;top:84px;width:1px;height:21px;background:#B4B4B4"></div><div style="left:816px;top:104px;width:71px;height:1px;background:#B4B4B4"></div><div style="left:957px;top:84px;width:1px;height:21px;background:#B4B4B4"></div><div style="left:887px;top:104px;width:71px;height:1px;background:#B4B4B4"></div><div style="left:1028px;top:84px;width:1px;height:21px;background:#B4B4B4"></div><div style="left:958px;top:104px;width:71px;height:1px;background:#B4B4B4"></div><div style="left:0px;top:105px;width:70px;height:20px;background:#D4D0C8"></div><div style="left:0px;top:105px;width:70px;height:1px;background:#FFFFFF"></div><div style="left:0px;top:105px;width:1px;height:20px;background:#FFFFFF"></div><div style="left:0px;top:124px;width:70px;height:1px;background:#808080"></div><div style="left:69px;top:105px;width:1px;height:20px;background:#808080"></div><div style="left:70px;top:105px;width:1px;height:21px;background:#000"></div><div style="left:0px;top:125px;width:71px;height:1px;background:#000"></div><div class="t c" style="left:2px;top:108px;width:68px;color:#000">4</div><div style="left:191px;top:105px;width:1px;height:21px;background:#B4B4B4"></div><div style="left:71px;top:125px;width:121px;height:1px;background:#B4B4B4"></div><div class="t c" style="left:73px;top:108px;width:118px;color:#000"><span style="letter-spacing:-0.3px">15b8|||||al049660|||||c</span></div><div style="left:318px;top:105px;width:1px;height:21px;background:#B4B4B4"></div><div style="left:192px;top:125px;width:127px;height:1px;background:#B4B4B4"></div><div class="t c" style="left:194px;top:108px;width:124px;color:#000">   0.52</div><div style="left:389px;top:105px;width:1px;height:21px;background:#B4B4B4"></div><div style="left:319px;top:125px;width:71px;height:1px;background:#B4B4B4"></div><div style="left:460px;top:105px;width:1px;height:21px;background:#B4B4B4"></div><div style="left:390px;top:125px;width:71px;height:1px;background:#B4B4B4"></div><div style="left:531px;top:105px;width:1px;height:21px;background:#B4B4B4"></div><div style="left:461px;top:125px;width:71px;height:1px;background:#B4B4B4"></div><div style="left:602px;top:105px;width:1px;height:21px;background:#B4B4B4"></div><div style="left:532px;top:125px;width:71px;height:1px;background:#B4B4B4"></div><div style="left:673px;top:105px;width:1px;height:21px;background:#B4B4B4"></div><div style="left:603px;top:125px;width:71px;height:1px;background:#B4B4B4"></div><div style="left:744px;top:105px;width:1px;height:21px;background:#B4B4B4"></div><div style="left:674px;top:125px;width:71px;height:1px;background:#B4B4B4"></div><div style="left:815px;top:105px;width:1px;height:21px;background:#B4B4B4"></div><div style="left:745px;top:125px;width:71px;height:1px;background:#B4B4B4"></div><div style="left:886px;top:105px;width:1px;height:21px;background:#B4B4B4"></div><div style="left:816px;top:125px;width:71px;height:1px;background:#B4B4B4"></div><div style="left:957px;top:105px;width:1px;height:21px;background:#B4B4B4"></div><div style="left:887px;top:125px;width:71px;height:1px;background:#B4B4B4"></div><div style="left:1028px;top:105px;width:1px;height:21px;background:#B4B4B4"></div><div style="left:958px;top:125px;width:71px;height:1px;background:#B4B4B4"></div></div>
<div style="left:957px;top:468px;width:16px;height:119px;background:repeating-conic-gradient(#fff 0 25%, #D4D0C8 0 50%) 0 0/2px 2px;"></div>
<div style="left:957px;top:468px;width:16px;height:16px;background:#D4D0C8;"></div>
<div style="left:957px;top:468px;width:16px;height:1px;background:#D4D0C8;"></div>
<div style="left:957px;top:468px;width:1px;height:16px;background:#D4D0C8;"></div>
<div style="left:957px;top:483px;width:16px;height:1px;background:#404040;"></div>
<div style="left:972px;top:468px;width:1px;height:16px;background:#404040;"></div>
<div style="left:958px;top:469px;width:14px;height:1px;background:#FFFFFF;"></div>
<div style="left:958px;top:469px;width:1px;height:14px;background:#FFFFFF;"></div>
<div style="left:958px;top:482px;width:14px;height:1px;background:#808080;"></div>
<div style="left:971px;top:469px;width:1px;height:14px;background:#808080;"></div>
<svg style="left:0;top:0;width:985px;height:673px" width="985" height="673"><polygon points="961,478 969,478 965,474" fill="#000"/></svg>
<div style="left:957px;top:484px;width:16px;height:16px;background:#D4D0C8;"></div>
<div style="left:957px;top:484px;width:16px;height:1px;background:#D4D0C8;"></div>
<div style="left:957px;top:484px;width:1px;height:16px;background:#D4D0C8;"></div>
<div style="left:957px;top:499px;width:16px;height:1px;background:#404040;"></div>
<div style="left:972px;top:484px;width:1px;height:16px;background:#404040;"></div>
<div style="left:958px;top:485px;width:14px;height:1px;background:#FFFFFF;"></div>
<div style="left:958px;top:485px;width:1px;height:14px;background:#FFFFFF;"></div>
<div style="left:958px;top:498px;width:14px;height:1px;background:#808080;"></div>
<div style="left:971px;top:485px;width:1px;height:14px;background:#808080;"></div>
<div style="left:957px;top:571px;width:16px;height:16px;background:#D4D0C8;"></div>
<div style="left:957px;top:571px;width:16px;height:1px;background:#D4D0C8;"></div>
<div style="left:957px;top:571px;width:1px;height:16px;background:#D4D0C8;"></div>
<div style="left:957px;top:586px;width:16px;height:1px;background:#404040;"></div>
<div style="left:972px;top:571px;width:1px;height:16px;background:#404040;"></div>
<div style="left:958px;top:572px;width:14px;height:1px;background:#FFFFFF;"></div>
<div style="left:958px;top:572px;width:1px;height:14px;background:#FFFFFF;"></div>
<div style="left:958px;top:585px;width:14px;height:1px;background:#808080;"></div>
<div style="left:971px;top:572px;width:1px;height:14px;background:#808080;"></div>
<svg style="left:0;top:0;width:985px;height:673px" width="985" height="673"><polygon points="961,578 969,578 965,582" fill="#000"/></svg>
<div style="left:12px;top:587px;width:945px;height:16px;background:repeating-conic-gradient(#fff 0 25%, #D4D0C8 0 50%) 0 0/2px 2px;"></div>
<div style="left:12px;top:587px;width:16px;height:16px;background:#D4D0C8;"></div>
<div style="left:12px;top:587px;width:16px;height:1px;background:#D4D0C8;"></div>
<div style="left:12px;top:587px;width:1px;height:16px;background:#D4D0C8;"></div>
<div style="left:12px;top:602px;width:16px;height:1px;background:#404040;"></div>
<div style="left:27px;top:587px;width:1px;height:16px;background:#404040;"></div>
<div style="left:13px;top:588px;width:14px;height:1px;background:#FFFFFF;"></div>
<div style="left:13px;top:588px;width:1px;height:14px;background:#FFFFFF;"></div>
<div style="left:13px;top:601px;width:14px;height:1px;background:#808080;"></div>
<div style="left:26px;top:588px;width:1px;height:14px;background:#808080;"></div>
<svg style="left:0;top:0;width:985px;height:673px" width="985" height="673"><polygon points="21,591 21,599 17,595" fill="#000"/></svg>
<div style="left:28px;top:587px;width:16px;height:16px;background:#D4D0C8;"></div>
<div style="left:28px;top:587px;width:16px;height:1px;background:#D4D0C8;"></div>
<div style="left:28px;top:587px;width:1px;height:16px;background:#D4D0C8;"></div>
<div style="left:28px;top:602px;width:16px;height:1px;background:#404040;"></div>
<div style="left:43px;top:587px;width:1px;height:16px;background:#404040;"></div>
<div style="left:29px;top:588px;width:14px;height:1px;background:#FFFFFF;"></div>
<div style="left:29px;top:588px;width:1px;height:14px;background:#FFFFFF;"></div>
<div style="left:29px;top:601px;width:14px;height:1px;background:#808080;"></div>
<div style="left:42px;top:588px;width:1px;height:14px;background:#808080;"></div>
<div style="left:941px;top:587px;width:16px;height:16px;background:#D4D0C8;"></div>
<div style="left:941px;top:587px;width:16px;height:1px;background:#D4D0C8;"></div>
<div style="left:941px;top:587px;width:1px;height:16px;background:#D4D0C8;"></div>
<div style="left:941px;top:602px;width:16px;height:1px;background:#404040;"></div>
<div style="left:956px;top:587px;width:1px;height:16px;background:#404040;"></div>
<div style="left:942px;top:588px;width:14px;height:1px;background:#FFFFFF;"></div>
<div style="left:942px;top:588px;width:1px;height:14px;background:#FFFFFF;"></div>
<div style="left:942px;top:601px;width:14px;height:1px;background:#808080;"></div>
<div style="left:955px;top:588px;width:1px;height:14px;background:#808080;"></div>
<svg style="left:0;top:0;width:985px;height:673px" width="985" height="673"><polygon points="948,591 948,599 952,595" fill="#000"/></svg>
<div style="left:957px;top:587px;width:16px;height:16px;background:#D4D0C8;"></div>
<div style="left:6px;top:612px;width:862px;height:1px;background:#808080;"></div>
<div style="left:6px;top:612px;width:1px;height:12px;background:#808080;"></div>
<div style="left:6px;top:623px;width:862px;height:1px;background:#FFFFFF;"></div>
<div style="left:867px;top:612px;width:1px;height:12px;background:#FFFFFF;"></div>
<div style="left:6px;top:624px;width:862px;height:1px;background:#808080;"></div>
<div style="left:6px;top:624px;width:1px;height:12px;background:#808080;"></div>
<div style="left:6px;top:635px;width:862px;height:1px;background:#FFFFFF;"></div>
<div style="left:867px;top:624px;width:1px;height:12px;background:#FFFFFF;"></div>
<div style="left:6px;top:636px;width:862px;height:1px;background:#808080;"></div>
<div style="left:6px;top:636px;width:1px;height:12px;background:#808080;"></div>
<div style="left:6px;top:647px;width:862px;height:1px;background:#FFFFFF;"></div>
<div style="left:867px;top:636px;width:1px;height:12px;background:#FFFFFF;"></div>
<div style="left:882px;top:614px;width:92px;height:32px;background:#D4D0C8;"></div>
<div style="left:882px;top:614px;width:92px;height:1px;background:#FFFFFF;"></div>
<div style="left:882px;top:614px;width:1px;height:32px;background:#FFFFFF;"></div>
<div style="left:882px;top:645px;width:92px;height:1px;background:#404040;"></div>
<div style="left:973px;top:614px;width:1px;height:32px;background:#404040;"></div>
<div style="left:883px;top:615px;width:90px;height:1px;background:#D4D0C8;"></div>
<div style="left:883px;top:615px;width:1px;height:30px;background:#D4D0C8;"></div>
<div style="left:883px;top:644px;width:90px;height:1px;background:#808080;"></div>
<div style="left:972px;top:615px;width:1px;height:30px;background:#808080;"></div>
<div class="t" style="left:882px;top:621px;font-size:13px;line-height:15px;color:#000;width:92px;text-align:center;"><u>C</u>lose</div>
<div style="left:4px;top:651px;width:50px;height:1px;background:#808080;"></div>
<div style="left:4px;top:651px;width:1px;height:18px;background:#808080;"></div>
<div style="left:4px;top:668px;width:50px;height:1px;background:#FFFFFF;"></div>
<div style="left:53px;top:651px;width:1px;height:18px;background:#FFFFFF;"></div>
<div style="left:56px;top:651px;width:48px;height:1px;background:#808080;"></div>
<div style="left:56px;top:651px;width:1px;height:18px;background:#808080;"></div>
<div style="left:56px;top:668px;width:48px;height:1px;background:#FFFFFF;"></div>
<div style="left:103px;top:651px;width:1px;height:18px;background:#FFFFFF;"></div>
<div style="left:106px;top:651px;width:48px;height:1px;background:#808080;"></div>
<div style="left:106px;top:651px;width:1px;height:18px;background:#808080;"></div>
<div style="left:106px;top:668px;width:48px;height:1px;background:#FFFFFF;"></div>
<div style="left:153px;top:651px;width:1px;height:18px;background:#FFFFFF;"></div>
<div style="left:156px;top:651px;width:48px;height:1px;background:#808080;"></div>
<div style="left:156px;top:651px;width:1px;height:18px;background:#808080;"></div>
<div style="left:156px;top:668px;width:48px;height:1px;background:#FFFFFF;"></div>
<div style="left:203px;top:651px;width:1px;height:18px;background:#FFFFFF;"></div>
<div style="left:206px;top:651px;width:775px;height:1px;background:#808080;"></div>
<div style="left:206px;top:651px;width:1px;height:18px;background:#808080;"></div>
<div style="left:206px;top:668px;width:775px;height:1px;background:#FFFFFF;"></div>
<div style="left:980px;top:651px;width:1px;height:18px;background:#FFFFFF;"></div>
<svg style="left:966px;top:656px;width:14px;height:14px" width="14" height="14"><path d="M13 1 L1 13 M13 5 L5 13 M13 9 L9 13" stroke="#fff" stroke-width="1"/><path d="M13 2 L2 13 M13 6 L6 13 M13 10 L10 13" stroke="#808080" stroke-width="1.4"/></svg>
</body></html>
